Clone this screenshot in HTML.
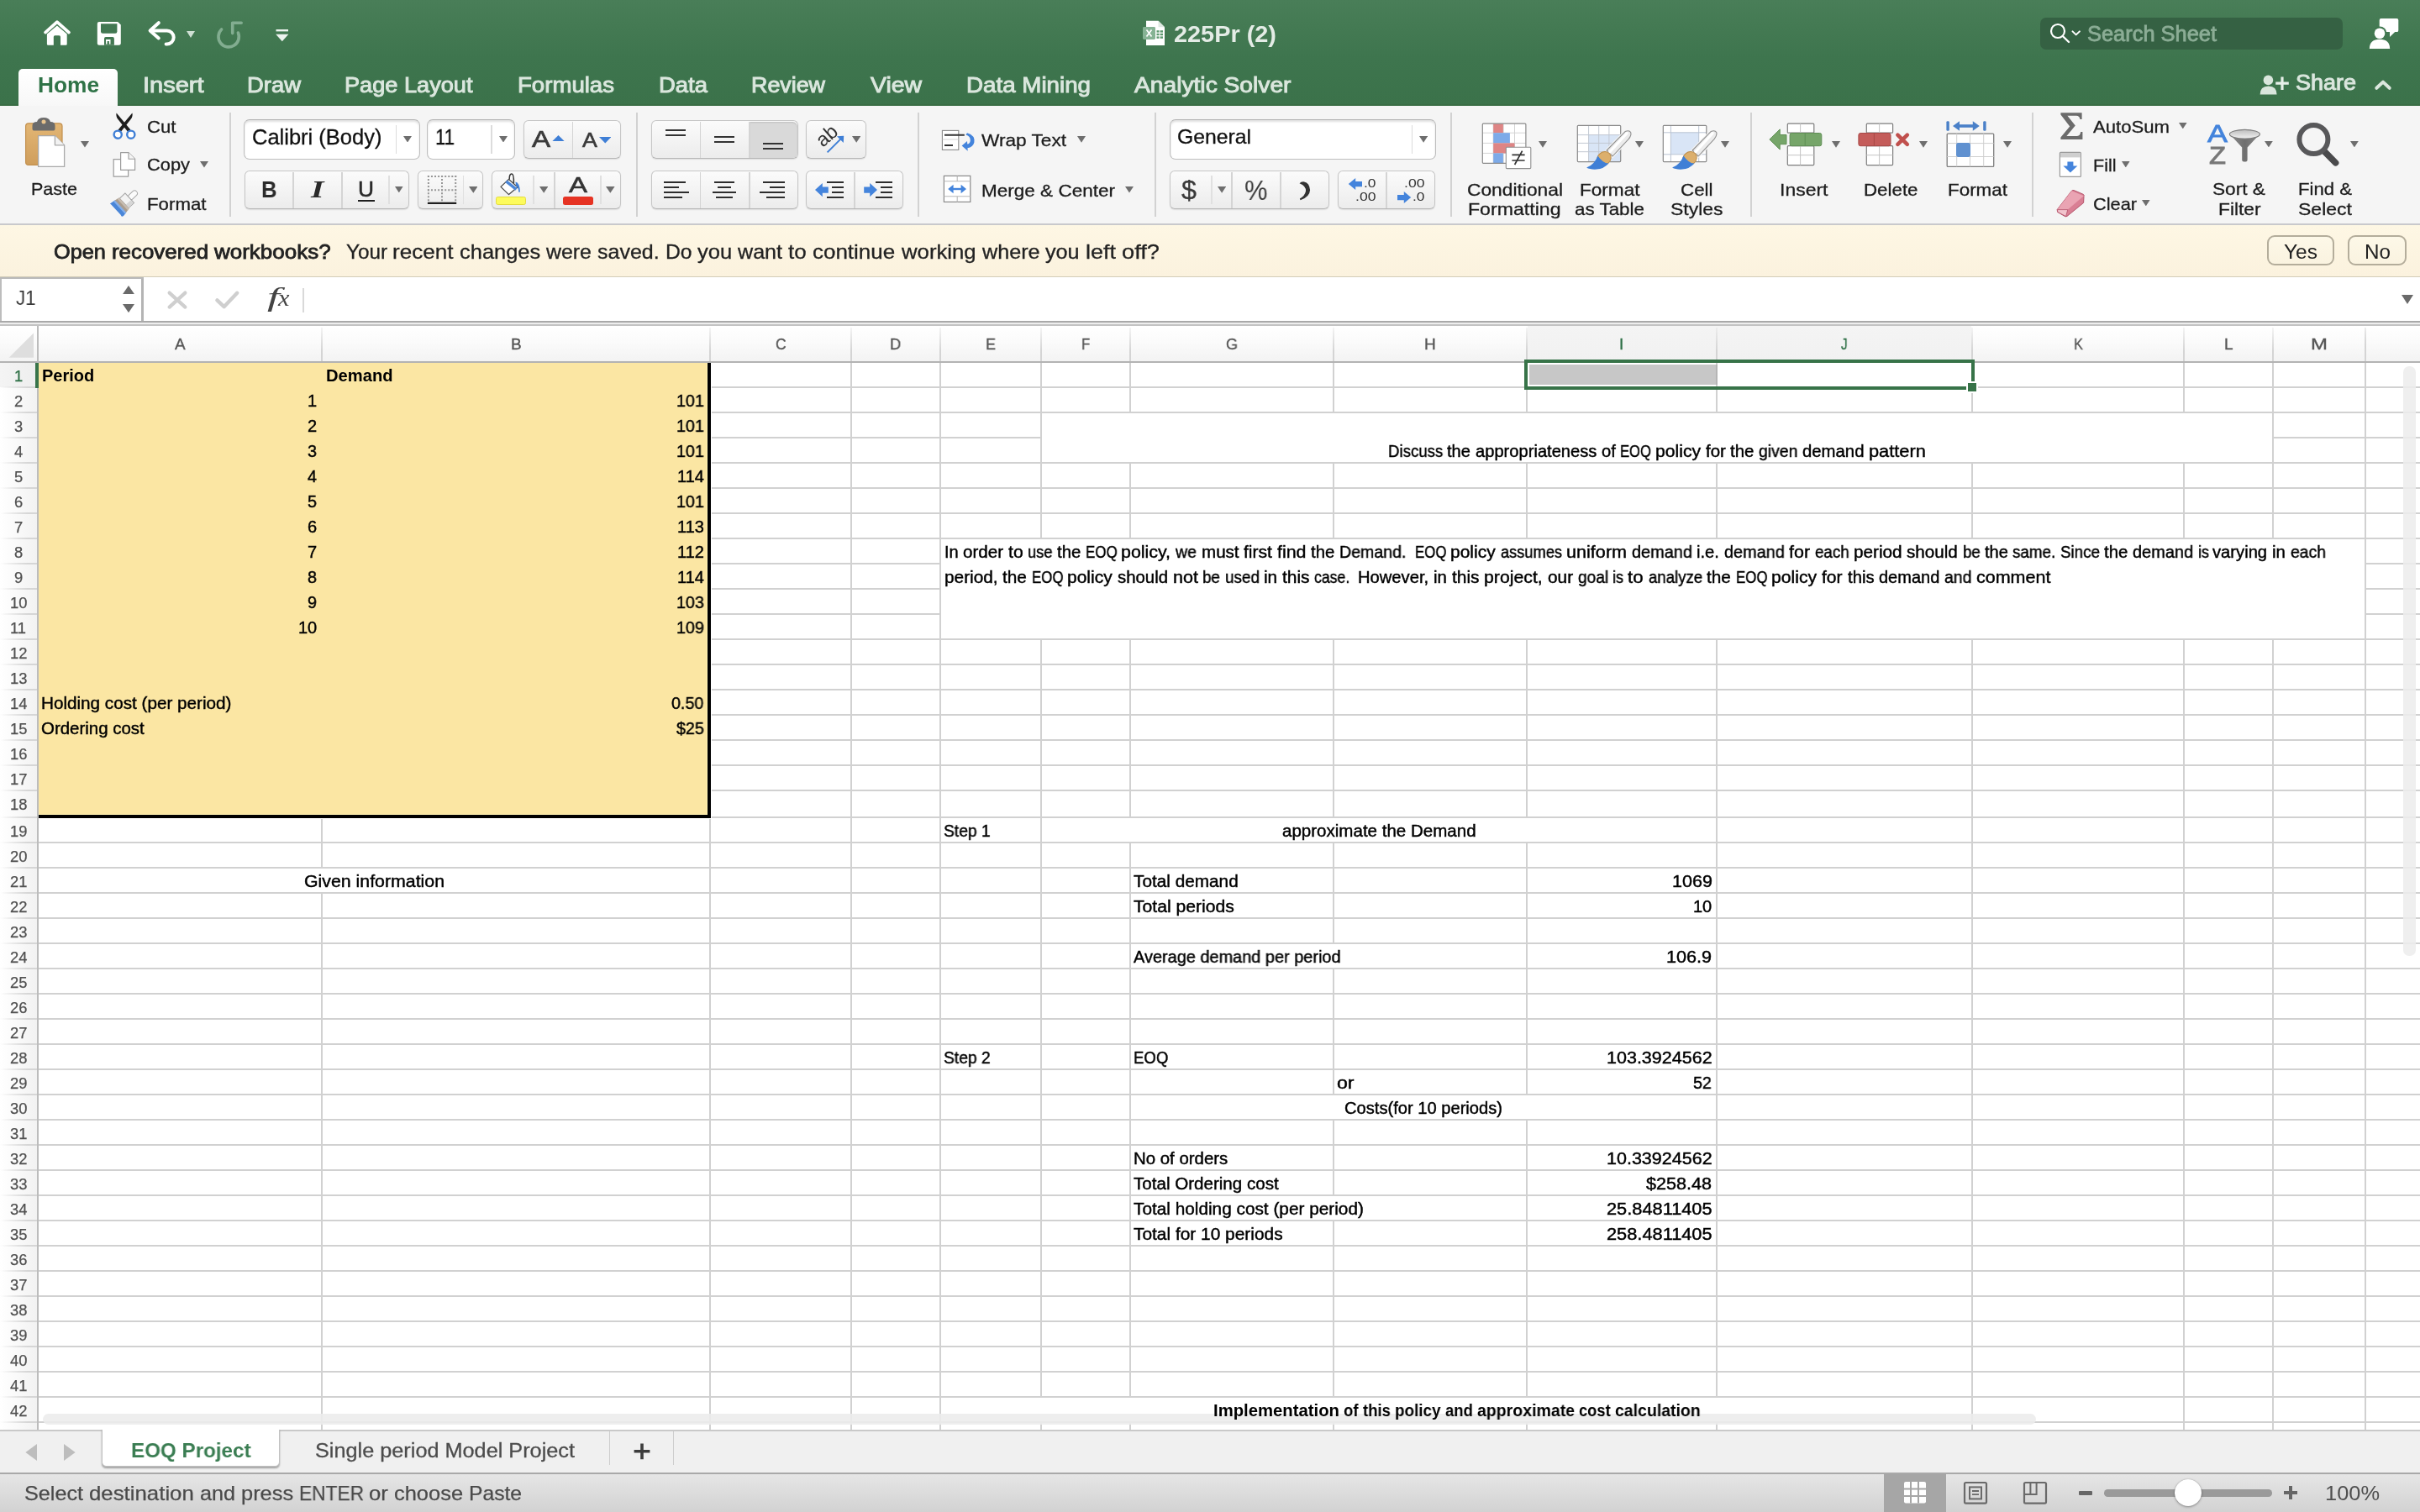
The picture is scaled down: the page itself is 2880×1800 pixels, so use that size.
<!DOCTYPE html>
<html><head><meta charset="utf-8"><title>225Pr (2)</title>
<style>
html,body{margin:0;padding:0;overflow:hidden;}
body{width:2880px;height:1800px;position:relative;overflow:hidden;background:#fff;font-family:"Liberation Sans",sans-serif;}
.b{position:absolute;display:block;}
.t{position:absolute;white-space:pre;transform-origin:0 0;display:block;will-change:transform;}
</style></head><body>
<div class="b" style="left:0px;top:0px;width:2880px;height:126px;background:linear-gradient(#497e58 0%,#447a53 25%,#3e754e 55%,#3b724a 100%);"></div>
<div class="b" style="left:0px;top:124px;width:2880px;height:2px;background:#38693f;opacity:.55"></div>
<svg class="b" style="left:48px;top:20px;" width="40" height="38" viewBox="0 0 40 38"><path d="M6 18.6 L19.9 6.2 L34 18.6" fill="none" stroke="#fff" stroke-width="3.7" stroke-linecap="round" stroke-linejoin="round"/>
<path d="M7.9 20.5 L19.9 10.4 L31.7 20.5 V32.4 Q31.7 33.7 30.4 33.7 H24 V24 Q24 22.2 22.4 22.2 H17.4 Q15.8 22.2 15.8 24 V33.7 H9.2 Q7.9 33.7 7.9 32.4 Z" fill="#fff"/></svg>
<svg class="b" style="left:114px;top:24px;" width="32" height="32" viewBox="0 0 32 32"><path d="M1.8 4.1 Q1.8 1.9 4 1.9 H26.2 L29.8 5.4 V27.5 Q29.8 29.7 27.6 29.7 H4 Q1.8 29.7 1.8 27.5 Z" fill="#fff"/>
<path d="M6 4.3 H25.4 V13.6 Q25.4 15.8 23.2 15.8 H8.2 Q6 15.8 6 13.6 Z" fill="#427852"/>
<path d="M10 22 Q10 20.1 11.9 20.1 H20 Q21.9 20.1 21.9 22 V29.7 H10 Z" fill="#427852"/>
<path d="M12 23 H17.5 V28.6 H15.9 V25 H13.6 V28.6 H12 Z" fill="#fff"/></svg>
<svg class="b" style="left:174px;top:22px;" width="40" height="36" viewBox="0 0 40 36"><path d="M14.8 5.2 L4.6 14.5 L14.8 23.5" fill="none" stroke="#fff" stroke-width="4" stroke-linecap="round" stroke-linejoin="round"/>
<path d="M5.6 14.5 H24.7 A8 8 0 0 1 24.7 30.5 H23.6" fill="none" stroke="#fff" stroke-width="4" stroke-linecap="round"/></svg>
<svg class="b" style="left:222px;top:37px;" width="10" height="8" viewBox="0 0 10 8"><path d="M0 0H10L5.0 8Z" fill="#cfe0d4"/></svg>
<svg class="b" style="left:254px;top:22px;" width="40" height="38" viewBox="0 0 40 38"><path d="M22.7 17.6 V5.2 H33.2" fill="none" stroke="#82ad90" stroke-width="3.6" stroke-linecap="round" stroke-linejoin="round"/>
<path d="M9.6 13 A12.2 12.2 0 1 0 29.4 17" fill="none" stroke="#82ad90" stroke-width="3.6" stroke-linecap="round"/></svg>
<svg class="b" style="left:327px;top:34px;" width="18" height="16" viewBox="0 0 18 16"><rect x="1.5" y="1" width="14.5" height="2.4" fill="#eef4f0"/><path d="M1.2 6.8 H16.4 L8.8 15.2 Z" fill="#eef4f0"/></svg>
<svg class="b" style="left:1358px;top:22px;" width="30" height="34" viewBox="0 0 30 34"><path d="M6 2.8 H20.5 L28 10.3 V32 H6 Z" fill="#fff"/><path d="M20.5 2.8 L28 10.3 H20.5 Z" fill="#dfe9e2"/>
<g fill="#5f9a70"><rect x="18.5" y="14.2" width="3" height="2.4"/><rect x="22.6" y="14.2" width="3.4" height="2.4"/><rect x="18.5" y="17.8" width="3" height="2.4"/><rect x="22.6" y="17.8" width="3.4" height="2.4"/><rect x="18.5" y="21.4" width="3" height="2.4"/><rect x="22.6" y="21.4" width="3.4" height="2.4"/></g>
<rect x="2" y="10" width="15" height="15" rx="1.4" fill="#86b394"/>
<path d="M6.5 13.6 L12.5 21.6 M12.5 13.6 L6.5 21.6" stroke="#fff" stroke-width="1.7"/></svg>
<div class="b" style="left:2428px;top:21px;width:360px;height:38px;background:#356143;border-radius:7px;"></div>
<svg class="b" style="left:2436px;top:24px;" width="48" height="32" viewBox="0 0 48 32"><circle cx="13" cy="13" r="8" fill="none" stroke="#fff" stroke-width="2.2"/><path d="M18.8 19 L26 26" stroke="#fff" stroke-width="2.4" stroke-linecap="round"/>
<path d="M30.5 13.4 L34.7 17.4 L38.9 13.4" fill="none" stroke="#fff" stroke-width="2" stroke-linecap="round" stroke-linejoin="round"/></svg>
<svg class="b" style="left:2816px;top:18px;" width="42" height="44" viewBox="0 0 42 44"><path d="M17.6 4 H36.4 Q38.3 4 38.3 5.9 V18.2 Q38.3 20.1 36.4 20.1 H34.2 L28 25.9 V20.1 H17.6 Q15.7 20.1 15.7 18.2 V5.9 Q15.7 4 17.6 4 Z" fill="#fff"/>
<circle cx="16" cy="21.8" r="8.4" fill="#417850"/><circle cx="16" cy="21.8" r="6.3" fill="#fff"/>
<path d="M3.8 39.9 Q4.2 28.8 16 28.8 Q27.8 28.8 28.2 39.9 Z" fill="#fff"/></svg>
<div class="b" style="left:22px;top:82px;width:118px;height:46px;background:linear-gradient(#ffffff,#f7f7f7);border-radius:5px 5px 0 0;"></div>
<svg class="b" style="left:2686px;top:86px;" width="42" height="30" viewBox="0 0 42 30"><circle cx="13.4" cy="9.4" r="5.8" fill="#d9e6dc"/><path d="M3.6 26.6 Q3.6 16.4 13.6 16.4 Q23.6 16.4 23.6 26.6 Z" fill="#d9e6dc"/>
<path d="M30 5.4 V21 M22.2 13.2 H37.8" stroke="#e6efe8" stroke-width="3.2"/></svg>
<svg class="b" style="left:2822px;top:92px;" width="28" height="18" viewBox="0 0 28 18"><path d="M6.3 12.8 L14 5.6 L21.7 12.8" fill="none" stroke="#dbe7de" stroke-width="4" stroke-linecap="round" stroke-linejoin="round"/></svg>
<div class="b" style="left:0px;top:126px;width:2880px;height:140px;background:#f5f5f5;"></div>
<div class="b" style="left:0px;top:266px;width:2880px;height:2px;background:#c9c9cc;"></div>
<div class="b" style="left:272.5px;top:134px;width:2px;height:124px;background:#d2d2d2;"></div>
<div class="b" style="left:756.5px;top:134px;width:2px;height:124px;background:#d2d2d2;"></div>
<div class="b" style="left:1092px;top:134px;width:2px;height:124px;background:#d2d2d2;"></div>
<div class="b" style="left:1374px;top:134px;width:2px;height:124px;background:#d2d2d2;"></div>
<div class="b" style="left:1726px;top:134px;width:2px;height:124px;background:#d2d2d2;"></div>
<div class="b" style="left:2082.5px;top:134px;width:2px;height:124px;background:#d2d2d2;"></div>
<div class="b" style="left:2418px;top:134px;width:2px;height:124px;background:#d2d2d2;"></div>
<svg class="b" style="left:26px;top:136px;" width="56" height="66" viewBox="0 0 56 66"><defs><linearGradient id="pg" x1="0" y1="0" x2="0" y2="1"><stop offset="0" stop-color="#e3b674"/><stop offset="1" stop-color="#cf9e5c"/></linearGradient></defs>
<rect x="4.6" y="10.8" width="43.4" height="49.6" rx="3.5" fill="url(#pg)" stroke="#c2904e" stroke-width="1.2"/>
<path d="M12.5 13.5 Q12.5 9.2 18 9 Q19.4 4 26 4 Q32.6 4 34 9 Q39.5 9.2 39.5 13.5 V17 Q39.5 19.6 37 19.6 H15 Q12.5 19.6 12.5 17 Z" fill="#6b6b6b"/>
<circle cx="26" cy="9" r="2.5" fill="#e8c48e"/>
<path d="M19.6 25.6 H39.4 L50.6 36.8 V62.4 H19.6 Z" fill="#fff" stroke="#a9a9a9" stroke-width="1.3"/>
<path d="M39.4 25.6 V36.8 H50.6" fill="#f2f2f2" stroke="#a9a9a9" stroke-width="1.3" stroke-linejoin="round"/></svg>
<svg class="b" style="left:96px;top:168px;" width="10" height="7.6" viewBox="0 0 10 7.6"><path d="M0 0H10L5.0 7.6Z" fill="#6e6e6e"/></svg>
<svg class="b" style="left:130px;top:130px;" width="36" height="40" viewBox="0 0 36 40"><path d="M8.6 4.4 Q7.6 8 10.4 12 L22.6 27.6 L25.4 24.6 Z" fill="#1e1e1e"/>
<path d="M27.4 4.4 Q28.4 8 25.6 12 L13.4 27.6 L10.6 24.6 Z" fill="#1e1e1e"/>
<circle cx="10.2" cy="30.2" r="4.6" fill="#fff" stroke="#3f7fd6" stroke-width="2.4"/><circle cx="25.8" cy="30.2" r="4.6" fill="#fff" stroke="#3f7fd6" stroke-width="2.4"/></svg>
<svg class="b" style="left:131px;top:178px;" width="34" height="36" viewBox="0 0 34 36"><path d="M4.2 11.6 H21.6 V32.2 H4.2 Z" fill="#fff" stroke="#9c9c9c" stroke-width="1.2"/>
<path d="M12.6 3.6 H22 L29.6 11.2 V24.4 H12.6 Z" fill="#fff" stroke="#9c9c9c" stroke-width="1.2" stroke-linejoin="round"/><path d="M22 3.6 V11.2 H29.6" fill="#f4f4f4" stroke="#9c9c9c" stroke-width="1.1" stroke-linejoin="round"/></svg>
<svg class="b" style="left:238px;top:192.4px;" width="10" height="7.6" viewBox="0 0 10 7.6"><path d="M0 0H10L5.0 7.6Z" fill="#6e6e6e"/></svg>
<svg class="b" style="left:126px;top:220px;" width="44" height="44" viewBox="0 0 44 44"><g transform="translate(13.6 29.4) rotate(-43)">
<rect x="19" y="-3.3" width="12.4" height="6.6" rx="3.3" fill="#fbfbfb" stroke="#a9a9a9" stroke-width="1"/>
<path d="M11 -7.8 H20 V7.8 H11 Z" fill="#f3f3f3" stroke="#a3a3a3" stroke-width="1"/><path d="M11.5 2.8 H19.5 V7.3 H11.5 Z" fill="#d6d6d6"/>
<path d="M5.2 -9.9 L11 -8.7 V8.7 L5.2 9.9 Z" fill="#a99c8e"/><path d="M8.4 -9.3 L11 -8.7 V8.7 L8.4 9.3 Z" fill="#c7bcb0"/>
<path d="M-1.4 -9.6 Q-2.4 -11 -0.8 -10.9 L5.2 -9.9 V9.9 L0.6 10.6 Q-2.8 10.4 -1.4 7.4 Z" fill="#4a86d8"/><path d="M3.2 -10.2 L5.2 -9.9 V9.9 L3.2 10.2 Z" fill="#86b0ea"/>
</g></svg>
<div class="b" style="left:290px;top:142px;width:210px;height:47.5px;background:#fff;border:1.5px solid #bebebe;border-top-color:#b2b2b2;border-radius:7px;box-sizing:border-box;box-shadow:inset 0 2px 2.5px rgba(0,0,0,.13);"></div>
<div class="b" style="left:470.5px;top:149px;width:1.5px;height:34px;background:#dcdcdc;"></div>
<svg class="b" style="left:480px;top:161.8px;" width="10" height="7.6" viewBox="0 0 10 7.6"><path d="M0 0H10L5.0 7.6Z" fill="#6e6e6e"/></svg>
<div class="b" style="left:508px;top:142px;width:105px;height:47.5px;background:#fff;border:1.5px solid #bebebe;border-top-color:#b2b2b2;border-radius:7px;box-sizing:border-box;box-shadow:inset 0 2px 2.5px rgba(0,0,0,.13);"></div>
<div class="b" style="left:584px;top:149px;width:1.5px;height:34px;background:#dcdcdc;"></div>
<svg class="b" style="left:593.5px;top:161.8px;" width="10" height="7.6" viewBox="0 0 10 7.6"><path d="M0 0H10L5.0 7.6Z" fill="#6e6e6e"/></svg>
<div class="b" style="left:623px;top:143px;width:116px;height:46px;background:linear-gradient(#fbfbfb,#ececec);border:1.5px solid #c6c6c6;border-bottom-color:#b7b7b7;border-radius:6px;box-sizing:border-box;box-shadow:0 1px 1.5px rgba(0,0,0,.10);"></div>
<div class="b" style="left:680.5px;top:144.5px;width:1.5px;height:43.5px;background:#d4d4d4;"></div>
<svg class="b" style="left:657px;top:161px;" width="15" height="7.4" viewBox="0 0 15 7.4"><path d="M0 7.4H15L7.5 0Z" fill="#3f7fd6"/></svg>
<svg class="b" style="left:712.5px;top:163.4px;" width="14.5" height="7.6" viewBox="0 0 14.5 7.6"><path d="M0 0H14.5L7.25 7.6Z" fill="#3f7fd6"/></svg>
<div class="b" style="left:291px;top:203px;width:196px;height:46px;background:linear-gradient(#fbfbfb,#ececec);border:1.5px solid #c6c6c6;border-bottom-color:#b7b7b7;border-radius:6px;box-sizing:border-box;box-shadow:0 1px 1.5px rgba(0,0,0,.10);"></div>
<div class="b" style="left:348.3px;top:204.5px;width:1.5px;height:43.5px;background:#d4d4d4;"></div>
<div class="b" style="left:406px;top:204.5px;width:1.5px;height:43.5px;background:#d4d4d4;"></div>
<div class="b" style="left:462.3px;top:209px;width:1.5px;height:34px;background:#e0e0e0;"></div>
<div class="b" style="left:426.2px;top:237.9px;width:20px;height:1.9px;background:#1f1f1f;"></div>
<svg class="b" style="left:470px;top:222px;" width="9.6" height="7.4" viewBox="0 0 9.6 7.4"><path d="M0 0H9.6L4.8 7.4Z" fill="#6e6e6e"/></svg>
<div class="b" style="left:497px;top:203px;width:78px;height:46px;background:linear-gradient(#fbfbfb,#ececec);border:1.5px solid #c6c6c6;border-bottom-color:#b7b7b7;border-radius:6px;box-sizing:border-box;box-shadow:0 1px 1.5px rgba(0,0,0,.10);"></div>
<svg class="b" style="left:506px;top:206px;" width="40" height="40" viewBox="0 0 40 40"><g stroke="#979797" stroke-width="2" stroke-dasharray="2 2.06" fill="none"><path d="M2.9 3.9 H37.2"/><path d="M2.9 20.3 H37.2"/><path d="M3.9 2.9 V33.4"/><path d="M20 2.9 V33.4"/><path d="M36.2 2.9 V33.4"/></g><path d="M2.9 35.9 H37.2" stroke="#1f1f1f" stroke-width="2.1"/></svg>
<div class="b" style="left:550.5px;top:209px;width:1.5px;height:34px;background:#e0e0e0;"></div>
<svg class="b" style="left:557.5px;top:222px;" width="10.6" height="7.8" viewBox="0 0 10.6 7.8"><path d="M0 0H10.6L5.3 7.8Z" fill="#6e6e6e"/></svg>
<div class="b" style="left:585px;top:203px;width:154px;height:46px;background:linear-gradient(#fbfbfb,#ececec);border:1.5px solid #c6c6c6;border-bottom-color:#b7b7b7;border-radius:6px;box-sizing:border-box;box-shadow:0 1px 1.5px rgba(0,0,0,.10);"></div>
<div class="b" style="left:590px;top:234.2px;width:36px;height:9.5px;background:#fdfb5c;border:1px solid #e4dc40;box-sizing:border-box;border-radius:2.5px;"></div>
<svg class="b" style="left:592px;top:204px;" width="32" height="32" viewBox="0 0 32 32"><path d="M4 18.4 L13.5 9.4 L24 18.8 L13.5 27.6 Z" fill="#fff" stroke="#4a4a4a" stroke-width="1.3" stroke-linejoin="round"/>
<path d="M10.4 11.9 L22.4 21.3" stroke="#4a86d8" stroke-width="3.4"/>
<path d="M21.4 12.4 Q26.6 13.2 26.9 24.6 Q26 25.2 25.2 24.4 Q25.2 19 22.2 17.4 Z" fill="#3f7fd6"/>
<path d="M14.2 9 Q14.2 2.8 17 3 Q19.6 3.2 19.4 13.4" fill="none" stroke="#333" stroke-width="1.5" stroke-linecap="round"/></svg>
<div class="b" style="left:634.3px;top:209px;width:1.5px;height:34px;background:#e0e0e0;"></div>
<svg class="b" style="left:642px;top:222px;" width="10.4" height="7.8" viewBox="0 0 10.4 7.8"><path d="M0 0H10.4L5.2 7.8Z" fill="#6e6e6e"/></svg>
<div class="b" style="left:659px;top:204.5px;width:1.5px;height:43.5px;background:#d4d4d4;"></div>
<div class="b" style="left:670px;top:234.2px;width:36px;height:9.5px;background:#e63323;border-radius:2.5px;"></div>
<div class="b" style="left:714px;top:209px;width:1.5px;height:34px;background:#e0e0e0;"></div>
<svg class="b" style="left:721.2px;top:222px;" width="10.6" height="7.8" viewBox="0 0 10.6 7.8"><path d="M0 0H10.6L5.3 7.8Z" fill="#6e6e6e"/></svg>
<div class="b" style="left:775px;top:143px;width:174.5px;height:46px;background:linear-gradient(#fbfbfb,#ececec);border:1.5px solid #c6c6c6;border-bottom-color:#b7b7b7;border-radius:6px;box-sizing:border-box;box-shadow:0 1px 1.5px rgba(0,0,0,.10);"></div>
<div class="b" style="left:892px;top:144.5px;width:56.5px;height:43.5px;background:#d9d9d9;border-radius:0 6px 6px 0;box-shadow:inset 0 1px 2px rgba(0,0,0,.12);"></div>
<div class="b" style="left:832.5px;top:144.5px;width:1.5px;height:43.5px;background:#d4d4d4;"></div>
<div class="b" style="left:891px;top:144.5px;width:1.5px;height:43.5px;background:#d4d4d4;"></div>
<div class="b" style="left:792px;top:154px;width:23.8px;height:2px;background:#333;"></div>
<div class="b" style="left:792px;top:160px;width:23.8px;height:2px;background:#333;"></div>
<div class="b" style="left:850.2px;top:162px;width:23.8px;height:2px;background:#333;"></div>
<div class="b" style="left:850.2px;top:168px;width:23.8px;height:2px;background:#333;"></div>
<div class="b" style="left:908.2px;top:170.2px;width:23.8px;height:2px;background:#333;"></div>
<div class="b" style="left:908.2px;top:176.2px;width:23.8px;height:2px;background:#333;"></div>
<div class="b" style="left:959px;top:143px;width:72px;height:46px;background:linear-gradient(#fbfbfb,#ececec);border:1.5px solid #c6c6c6;border-bottom-color:#b7b7b7;border-radius:6px;box-sizing:border-box;box-shadow:0 1px 1.5px rgba(0,0,0,.10);"></div>
<svg class="b" style="left:964px;top:146px;will-change:transform;" width="48" height="42" viewBox="0 0 48 42"><text x="0" y="0" font-family="Liberation Sans" font-size="23.5" fill="#333" transform="translate(15.2 30) rotate(-41)">ab</text>
<path d="M20.6 35.4 L38.6 17.4" stroke="#3f7fd6" stroke-width="2"/><path d="M32 16.2 L40.2 15.8 L39.8 24 Z" fill="#3f7fd6"/></svg>
<svg class="b" style="left:1014px;top:162.2px;" width="10.4" height="7.8" viewBox="0 0 10.4 7.8"><path d="M0 0H10.4L5.2 7.8Z" fill="#6e6e6e"/></svg>
<div class="b" style="left:775px;top:203px;width:174.5px;height:46px;background:linear-gradient(#fbfbfb,#ececec);border:1.5px solid #c6c6c6;border-bottom-color:#b7b7b7;border-radius:6px;box-sizing:border-box;box-shadow:0 1px 1.5px rgba(0,0,0,.10);"></div>
<div class="b" style="left:832.5px;top:204.5px;width:1.5px;height:43.5px;background:#d4d4d4;"></div>
<div class="b" style="left:891px;top:204.5px;width:1.5px;height:43.5px;background:#d4d4d4;"></div>
<div class="b" style="left:790px;top:216px;width:26px;height:2px;background:#2e2e2e;"></div>
<div class="b" style="left:790px;top:222px;width:18px;height:2px;background:#2e2e2e;"></div>
<div class="b" style="left:790px;top:228.2px;width:30px;height:2px;background:#2e2e2e;"></div>
<div class="b" style="left:790px;top:234.2px;width:22px;height:2px;background:#2e2e2e;"></div>
<div class="b" style="left:850px;top:216px;width:24px;height:2px;background:#2e2e2e;"></div>
<div class="b" style="left:854px;top:222px;width:16px;height:2px;background:#2e2e2e;"></div>
<div class="b" style="left:848px;top:228.2px;width:28px;height:2px;background:#2e2e2e;"></div>
<div class="b" style="left:852px;top:234.2px;width:20px;height:2px;background:#2e2e2e;"></div>
<div class="b" style="left:908px;top:216px;width:26px;height:2px;background:#2e2e2e;"></div>
<div class="b" style="left:916px;top:222px;width:18px;height:2px;background:#2e2e2e;"></div>
<div class="b" style="left:904px;top:228.2px;width:30px;height:2px;background:#2e2e2e;"></div>
<div class="b" style="left:912px;top:234.2px;width:22px;height:2px;background:#2e2e2e;"></div>
<div class="b" style="left:959px;top:203px;width:116px;height:46px;background:linear-gradient(#fbfbfb,#ececec);border:1.5px solid #c6c6c6;border-bottom-color:#b7b7b7;border-radius:6px;box-sizing:border-box;box-shadow:0 1px 1.5px rgba(0,0,0,.10);"></div>
<div class="b" style="left:1016.2px;top:204.5px;width:1.5px;height:43.5px;background:#d4d4d4;"></div>
<div class="b" style="left:984.2px;top:216px;width:19.799999999999955px;height:2px;background:#2e2e2e;"></div>
<div class="b" style="left:990.2px;top:222px;width:13.799999999999955px;height:2px;background:#2e2e2e;"></div>
<div class="b" style="left:990.2px;top:228.2px;width:13.799999999999955px;height:2px;background:#2e2e2e;"></div>
<div class="b" style="left:984.2px;top:234.2px;width:19.799999999999955px;height:2px;background:#2e2e2e;"></div>
<div class="b" style="left:1042px;top:216px;width:20px;height:2px;background:#2e2e2e;"></div>
<div class="b" style="left:1048px;top:222px;width:14px;height:2px;background:#2e2e2e;"></div>
<div class="b" style="left:1048px;top:228.2px;width:14px;height:2px;background:#2e2e2e;"></div>
<div class="b" style="left:1042px;top:234.2px;width:20px;height:2px;background:#2e2e2e;"></div>
<svg class="b" style="left:968px;top:216px;" width="20" height="20" viewBox="0 0 20 20"><path d="M2 10.1 L10.8 2 V6.6 H17.8 V13.8 H10.8 V18.2 Z" fill="#4484dc"/></svg>
<svg class="b" style="left:1026px;top:216px;" width="20" height="20" viewBox="0 0 20 20"><path d="M18 10.1 L9.2 2 V6.6 H2.2 V13.8 H9.2 V18.2 Z" fill="#4484dc"/></svg>
<svg class="b" style="left:1118px;top:152px;" width="46" height="32" viewBox="0 0 46 32"><rect x="3.4" y="3.4" width="19.4" height="23" fill="#fff" stroke="#8a8a8a" stroke-width="1.1"/>
<path d="M3.6 14 H22.6" stroke="#d4d4d4" stroke-width="1"/>
<path d="M6 8.7 H29.8 M6 21 H16" stroke="#333" stroke-width="2"/>
<path d="M33 6.2 Q42.8 9 41.4 17.6 Q40 23.4 33.4 24.2 L33.8 27.8 L26.6 21.6 L33 16 L33.2 19.6 Q36.4 19 36.8 15.2 Q37 10.4 31.4 8.6 Z" fill="#4484dc"/></svg>
<svg class="b" style="left:1282px;top:162px;" width="10" height="7.8" viewBox="0 0 10 7.8"><path d="M0 0H10L5.0 7.8Z" fill="#6e6e6e"/></svg>
<svg class="b" style="left:1120px;top:206px;" width="38" height="38" viewBox="0 0 38 38"><rect x="3.4" y="3.4" width="31.4" height="31" fill="#fff" stroke="#8a8a8a" stroke-width="1.2"/>
<path d="M3.4 9.8 H34.8 M3.4 27.8 H34.8 M19.2 3.4 V9.8 M19.2 27.8 V34.4" stroke="#b9b9b9" stroke-width="1.1"/>
<path d="M12 19 H27" stroke="#4484dc" stroke-width="2.4"/><path d="M8.2 19 L14.6 13.8 V24.2 Z M30 19 L23.6 13.8 V24.2 Z" fill="#4484dc"/></svg>
<svg class="b" style="left:1339.3px;top:222px;" width="10" height="7.6" viewBox="0 0 10 7.6"><path d="M0 0H10L5.0 7.6Z" fill="#6e6e6e"/></svg>
<div class="b" style="left:1391.5px;top:142px;width:317.5px;height:47.5px;background:#fff;border:1.5px solid #bebebe;border-top-color:#b2b2b2;border-radius:7px;box-sizing:border-box;box-shadow:inset 0 2px 2.5px rgba(0,0,0,.13);"></div>
<div class="b" style="left:1679.5px;top:149px;width:1.5px;height:34px;background:#dcdcdc;"></div>
<svg class="b" style="left:1688.8px;top:161.8px;" width="10.2" height="7.8" viewBox="0 0 10.2 7.8"><path d="M0 0H10.2L5.1 7.8Z" fill="#6e6e6e"/></svg>
<div class="b" style="left:1392.4px;top:203px;width:189.6px;height:46px;background:linear-gradient(#fbfbfb,#ececec);border:1.5px solid #c6c6c6;border-bottom-color:#b7b7b7;border-radius:6px;box-sizing:border-box;box-shadow:0 1px 1.5px rgba(0,0,0,.10);"></div>
<div class="b" style="left:1465px;top:204.5px;width:1.5px;height:43.5px;background:#d4d4d4;"></div>
<div class="b" style="left:1523.4px;top:204.5px;width:1.5px;height:43.5px;background:#d4d4d4;"></div>
<div class="b" style="left:1441.2px;top:209px;width:1.5px;height:34px;background:#e0e0e0;"></div>
<svg class="b" style="left:1448.8px;top:222px;" width="10.2" height="7.8" viewBox="0 0 10.2 7.8"><path d="M0 0H10.2L5.1 7.8Z" fill="#6e6e6e"/></svg>
<svg class="b" style="left:1542px;top:212px;" width="22" height="30" viewBox="0 0 22 30"><path d="M4.5 6.2 Q6.4 4 10.1 4.4 Q16.4 5.6 17.1 14.2 Q16.6 22.6 5.6 26.2 L4.8 24.4 Q11 21 12 15.4 Q12.6 9.6 4.5 6.2 Z" fill="#333"/></svg>
<div class="b" style="left:1592px;top:203px;width:116px;height:46px;background:linear-gradient(#fbfbfb,#ececec);border:1.5px solid #c6c6c6;border-bottom-color:#b7b7b7;border-radius:6px;box-sizing:border-box;box-shadow:0 1px 1.5px rgba(0,0,0,.10);"></div>
<div class="b" style="left:1649px;top:204.5px;width:1.5px;height:43.5px;background:#d4d4d4;"></div>
<svg class="b" style="left:1603px;top:210px;" width="20" height="18" viewBox="0 0 20 18"><path d="M1.8 9 L10.2 2 V6 H18 V12.2 H10.2 V16 Z" fill="#4484dc"/></svg>
<svg class="b" style="left:1661px;top:226px;" width="20" height="18" viewBox="0 0 20 18"><path d="M18.2 9 L9.8 2 V6 H2 V12.2 H9.8 V16 Z" fill="#4484dc"/></svg>
<svg class="b" style="left:1760px;top:144px;" width="66" height="60" viewBox="0 0 66 60"><rect x="4.3" y="3.2" width="51.6" height="47.1" fill="#fff"/>
<path d="M17.2 3.2 V50.3 M29.2 3.2 V50.3 M42.5 3.2 V50.3 M4.3 14.2 H55.9 M4.3 26.4 H55.9 M4.3 38.4 H55.9" stroke="#d4d4d4" stroke-width="1" fill="none"/>
<rect x="17.2" y="3.2" width="11.7" height="11" fill="#de8585"/><rect x="17.2" y="14.2" width="19.7" height="12.2" fill="#7daae8"/>
<rect x="17.2" y="26.4" width="25.3" height="12" fill="#de8585"/><rect x="17.2" y="38.4" width="11.7" height="11.9" fill="#7daae8"/>
<rect x="4.3" y="3.2" width="51.6" height="47.1" fill="none" stroke="#8a8a8a" stroke-width="1.2" rx="1"/>
<rect x="32.3" y="31.3" width="29.5" height="25.3" fill="#fff" stroke="#8f8f8f" stroke-width="1.1" rx="1"/>
<path d="M39.4 40.4 H54.6 M39.4 47 H54.6 M51.6 35.6 L42.6 52" stroke="#333" stroke-width="1.7"/></svg>
<svg class="b" style="left:1831px;top:168px;" width="10" height="7.8" viewBox="0 0 10 7.8"><path d="M0 0H10L5.0 7.8Z" fill="#6e6e6e"/></svg>
<svg class="b" style="left:1874px;top:144px;" width="72" height="60" viewBox="0 0 72 60"><rect x="3.3" y="5.3" width="51.4" height="43.3" fill="#fff"/>
<rect x="16.6" y="16.6" width="38.1" height="32" fill="#d9e5f6"/>
<path d="M16.6 5.3 V48.6 M28.7 5.3 V48.6 M40.9 5.3 V48.6 M3.3 16.6 H54.7 M3.3 26.4 H54.7 M3.3 36.7 H54.7" stroke="#c2c8d2" stroke-width="1" fill="none"/>
<rect x="3.3" y="5.3" width="51.4" height="43.3" fill="none" stroke="#8a8a8a" stroke-width="1.2" rx="1"/><g transform="translate(-1.5 4)">
<path d="M61.6 8.6 Q66.4 6.4 68.2 9.6 Q69.4 13 65.6 17.6 L46.6 38 L39.6 31 Z" fill="none" stroke="#f5f5f5" stroke-width="3.4" stroke-linejoin="round"/>
<path d="M61.6 8.6 Q66.4 6.4 68.2 9.6 Q69.4 13 65.6 17.6 L46.6 38 L39.6 31 Z" fill="#ececec" stroke="#8f8f8f" stroke-width="1.1" stroke-linejoin="round"/>
<path d="M63.6 10.6 L43.2 33" stroke="#ffffff" stroke-width="3.2" stroke-linecap="round"/>
<ellipse cx="36.4" cy="40.6" rx="9.4" ry="8" transform="rotate(-40 36.4 40.6)" fill="#f5f5f5"/>
<ellipse cx="36.4" cy="40.6" rx="8.8" ry="7.6" transform="rotate(-40 36.4 40.6)" fill="#dcaf6c" stroke="#b98a49" stroke-width="1"/>
<path d="M29 37.4 Q35.6 46.8 42 46.4 Q36 53 27.6 53.6 Q19.6 54 15.6 51.6 Q25 48 29 37.4 Z" fill="#3f7fd6"/>
</g></svg>
<svg class="b" style="left:1945.8px;top:168px;" width="10" height="7.8" viewBox="0 0 10 7.8"><path d="M0 0H10L5.0 7.8Z" fill="#6e6e6e"/></svg>
<svg class="b" style="left:1976px;top:144px;" width="72" height="60" viewBox="0 0 72 60"><rect x="3.3" y="5.3" width="51.5" height="43.3" fill="#fff"/>
<rect x="12.4" y="13.8" width="33.3" height="26" fill="#d9e5f6"/>
<path d="M12.4 5.3 V48.6 M45.7 5.3 V48.6 M3.3 13.8 H54.8 M3.3 39.8 H54.8" stroke="#b9c3d2" stroke-width="1" fill="none"/>
<rect x="3.3" y="5.3" width="51.5" height="43.3" fill="none" stroke="#8a8a8a" stroke-width="1.2" rx="1"/><g transform="translate(-1.5 4)">
<path d="M61.6 8.6 Q66.4 6.4 68.2 9.6 Q69.4 13 65.6 17.6 L46.6 38 L39.6 31 Z" fill="none" stroke="#f5f5f5" stroke-width="3.4" stroke-linejoin="round"/>
<path d="M61.6 8.6 Q66.4 6.4 68.2 9.6 Q69.4 13 65.6 17.6 L46.6 38 L39.6 31 Z" fill="#ececec" stroke="#8f8f8f" stroke-width="1.1" stroke-linejoin="round"/>
<path d="M63.6 10.6 L43.2 33" stroke="#ffffff" stroke-width="3.2" stroke-linecap="round"/>
<ellipse cx="36.4" cy="40.6" rx="9.4" ry="8" transform="rotate(-40 36.4 40.6)" fill="#f5f5f5"/>
<ellipse cx="36.4" cy="40.6" rx="8.8" ry="7.6" transform="rotate(-40 36.4 40.6)" fill="#dcaf6c" stroke="#b98a49" stroke-width="1"/>
<path d="M29 37.4 Q35.6 46.8 42 46.4 Q36 53 27.6 53.6 Q19.6 54 15.6 51.6 Q25 48 29 37.4 Z" fill="#3f7fd6"/>
</g></svg>
<svg class="b" style="left:2048px;top:168px;" width="10" height="7.8" viewBox="0 0 10 7.8"><path d="M0 0H10L5.0 7.8Z" fill="#6e6e6e"/></svg>
<svg class="b" style="left:2102px;top:142px;" width="70" height="58" viewBox="0 0 70 58"><rect x="25.3" y="5.2" width="31.5" height="11" fill="#fff" stroke="#7d7d7d" stroke-width="1.2" rx="1"/><path d="M40.6 5.2 V16.2" stroke="#c4c4c4"/>
<rect x="25.3" y="31.7" width="31.5" height="22.9" fill="#fff" stroke="#7d7d7d" stroke-width="1.2" rx="1"/><path d="M40.6 31.7 V54.6 M25.3 42.7 H56.8" stroke="#c4c4c4"/>
<rect x="28.1" y="16.5" width="37.7" height="15.2" rx="2.2" fill="#76a569" stroke="#5f8e54" stroke-width="1"/><path d="M46.2 16.5 V31.7" stroke="#5f8e54" stroke-width="1"/>
<path d="M3.9 24 L16.2 11.9 V18.5 H24 V29.7 H16.2 V36 Z" fill="#76a569" stroke="#5f8e54" stroke-width="1" stroke-linejoin="round"/></svg>
<svg class="b" style="left:2180.2px;top:167.8px;" width="10" height="7.8" viewBox="0 0 10 7.8"><path d="M0 0H10L5.0 7.8Z" fill="#6e6e6e"/></svg>
<svg class="b" style="left:2208px;top:142px;" width="70" height="58" viewBox="0 0 70 58"><rect x="13.3" y="5.2" width="31.3" height="11" fill="#fff" stroke="#7d7d7d" stroke-width="1.2" rx="1"/><path d="M28.6 5.2 V16.2" stroke="#c4c4c4"/>
<rect x="13.3" y="31.7" width="31.3" height="22.9" fill="#fff" stroke="#7d7d7d" stroke-width="1.2" rx="1"/><path d="M28.6 31.7 V54.6 M13.3 42.7 H44.6" stroke="#c4c4c4"/>
<rect x="3.9" y="16.5" width="38.1" height="15.2" rx="2.2" fill="#c45c5a" stroke="#a84846" stroke-width="1"/><path d="M22.4 16.5 V31.7" stroke="#a84846" stroke-width="1"/>
<path d="M50.4 18.6 L61.8 29.8 M61.8 18.6 L50.4 29.8" stroke="#c0504d" stroke-width="4.6" stroke-linecap="round"/></svg>
<svg class="b" style="left:2284.1px;top:167.8px;" width="10" height="7.8" viewBox="0 0 10 7.8"><path d="M0 0H10L5.0 7.8Z" fill="#6e6e6e"/></svg>
<svg class="b" style="left:2312px;top:140px;" width="66" height="62" viewBox="0 0 66 62"><rect x="5.2" y="19.1" width="55.5" height="39.3" fill="#fff" stroke="#7d7d7d" stroke-width="1.3" rx="1"/>
<path d="M16.7 19.1 V58.4 M32.5 19.1 V58.4 M48.7 19.1 V58.4 M5.2 30.6 H60.7 M5.2 46.5 H60.7" stroke="#cfcfcf" stroke-width="1"/>
<rect x="16" y="30.1" width="17" height="16.8" rx="2.4" fill="#6091d0"/>
<rect x="4.4" y="4.2" width="3.4" height="11.6" rx="1.4" fill="#4a80c8"/><rect x="48.2" y="4.2" width="3.4" height="11.6" rx="1.4" fill="#4a80c8"/>
<path d="M17 10 H39" stroke="#4a80c8" stroke-width="3.6"/><path d="M12 10 L20 4.2 V15.8 Z M43.8 10 L35.8 4.2 V15.8 Z" fill="#4a80c8"/></svg>
<svg class="b" style="left:2384.2px;top:167.8px;" width="10" height="7.8" viewBox="0 0 10 7.8"><path d="M0 0H10L5.0 7.8Z" fill="#6e6e6e"/></svg>
<svg class="b" style="left:2448px;top:130px;" width="34" height="40" viewBox="0 0 34 40"><path d="M4.4 4.2 H29.6 V12 H27.4 Q27 8 23 7.8 H12.4 L21.8 19.6 L11.4 32 H24 Q27.6 31.8 28.2 27 H30.4 V36 H4.4 V33.4 L15.2 20.4 L4.4 6.6 Z" fill="#6b6b6b"/></svg>
<svg class="b" style="left:2593.4px;top:145.8px;" width="9.6" height="7.4" viewBox="0 0 9.6 7.4"><path d="M0 0H9.6L4.8 7.4Z" fill="#6e6e6e"/></svg>
<svg class="b" style="left:2448px;top:178px;" width="32" height="36" viewBox="0 0 32 36"><rect x="3.4" y="3.4" width="25" height="29" fill="#fff" stroke="#9a9a9a" stroke-width="1.2" rx="1"/><rect x="4" y="4" width="23.8" height="5.4" fill="#cfcfcf"/>
<path d="M12.4 14.4 H19.4 V19.6 H24.4 L15.9 27.6 L7.4 19.6 H12.4 Z" fill="#4484dc"/></svg>
<svg class="b" style="left:2525px;top:192px;" width="9.6" height="7.4" viewBox="0 0 9.6 7.4"><path d="M0 0H9.6L4.8 7.4Z" fill="#6e6e6e"/></svg>
<svg class="b" style="left:2444px;top:222px;" width="40" height="40" viewBox="0 0 40 40"><path d="M4.2 27.6 L21.4 5.2 Q22.6 4 24.2 4.6 L35.4 9.4 Q36.6 10.2 36 11.6 L35.6 19.4 L16 35.4 Q14.6 36.2 13.2 35.4 L4.6 30.4 Z" fill="#d97f94" stroke="#b5546b" stroke-width="1"/>
<path d="M21.4 5.2 L35.8 11.2 L16.8 27.4 L4.4 27.4 Z" fill="#eaa4b3"/>
<path d="M4.4 27.6 L16.8 27.6 L14.6 35.6 L4.8 30.4 Z" fill="#f1c4cd" stroke="#b5546b" stroke-width=".8"/></svg>
<svg class="b" style="left:2549.4px;top:237.8px;" width="9.6" height="7.4" viewBox="0 0 9.6 7.4"><path d="M0 0H9.6L4.8 7.4Z" fill="#6e6e6e"/></svg>
<svg class="b" style="left:2650px;top:150px;" width="44" height="46" viewBox="0 0 44 46"><defs><linearGradient id="fg" x1="0" y1="0" x2="1" y2="0"><stop offset="0" stop-color="#8d8d8d"/><stop offset=".5" stop-color="#6f6f6f"/><stop offset="1" stop-color="#8a8a8a"/></linearGradient>
<linearGradient id="fe" x1="0" y1="0" x2="0" y2="1"><stop offset="0" stop-color="#bdbdbd"/><stop offset="1" stop-color="#f2f2f2"/></linearGradient></defs>
<path d="M3.4 9.6 L18.2 25.6 V40.4 Q18.2 42.4 20.4 42.4 H22.6 Q24.6 42.4 24.6 40.4 V25.6 L39.4 9.6 Z" fill="url(#fg)"/>
<ellipse cx="21.4" cy="9.8" rx="18" ry="5.4" fill="url(#fe)" stroke="#7d7d7d" stroke-width="1.2"/></svg>
<svg class="b" style="left:2695px;top:168px;" width="9.8" height="7.4" viewBox="0 0 9.8 7.4"><path d="M0 0H9.8L4.9 7.4Z" fill="#6e6e6e"/></svg>
<svg class="b" style="left:2728px;top:140px;" width="62" height="62" viewBox="0 0 62 62"><path d="M37 39 L51.6 53.8" stroke="#4a4a4c" stroke-width="7.6" stroke-linecap="round"/>
<circle cx="25.4" cy="26" r="17" fill="#f5f5f5" stroke="#58585a" stroke-width="6"/></svg>
<svg class="b" style="left:2797px;top:168px;" width="9.8" height="7.4" viewBox="0 0 9.8 7.4"><path d="M0 0H9.8L4.9 7.4Z" fill="#6e6e6e"/></svg>
<div class="b" style="left:0px;top:268px;width:2880px;height:61px;background:linear-gradient(#fef7e4,#fbf2de);"></div>
<div class="b" style="left:0px;top:328.5px;width:2880px;height:1.8px;background:#d3ccb8;"></div>
<div class="b" style="left:2698px;top:280px;width:80px;height:36px;background:linear-gradient(#fdf8e8,#faf3e0);border:2px solid #b4ad9b;border-radius:9px;box-sizing:border-box;"></div>
<div class="b" style="left:2794px;top:280px;width:70px;height:36px;background:linear-gradient(#fdf8e8,#faf3e0);border:2px solid #b4ad9b;border-radius:9px;box-sizing:border-box;"></div>
<div class="b" style="left:0px;top:330px;width:2880px;height:52px;background:#fff;"></div>
<div class="b" style="left:0px;top:330px;width:171px;height:2px;background:#b9b9b9;"></div>
<div class="b" style="left:0px;top:332px;width:1.6px;height:50px;background:#bdbdbd;"></div>
<div class="b" style="left:168.2px;top:332px;width:2.6px;height:52px;background:#b4b4b4;"></div>
<div class="b" style="left:0px;top:382px;width:2880px;height:2px;background:#a9a9a9;"></div>
<div class="b" style="left:0px;top:384px;width:2880px;height:2px;background:#ededed;"></div>
<div class="b" style="left:0px;top:386px;width:2880px;height:2px;background:#c3c3c3;"></div>
<svg class="b" style="left:146px;top:339.8px;" width="14" height="10.2" viewBox="0 0 14 10.2"><path d="M0 10.2H14L7.0 0Z" fill="#6a6a6a"/></svg>
<svg class="b" style="left:146px;top:362px;" width="14" height="10.2" viewBox="0 0 14 10.2"><path d="M0 0H14L7.0 10.2Z" fill="#6a6a6a"/></svg>
<svg class="b" style="left:198px;top:344px;" width="28" height="26" viewBox="0 0 28 26"><path d="M3.6 4.6 L22.4 21.6 M22.4 4.6 L3.6 21.6" stroke="#cfcfcf" stroke-width="4.2" stroke-linecap="round"/></svg>
<svg class="b" style="left:254px;top:344px;" width="34" height="26" viewBox="0 0 34 26"><path d="M4.4 13.4 L12.6 21.2 L28.2 4.8" fill="none" stroke="#cfcfcf" stroke-width="4.4" stroke-linecap="round" stroke-linejoin="round"/></svg>
<div class="b" style="left:360.3px;top:342.6px;width:1.6px;height:29px;background:#d9d9d9;"></div>
<svg class="b" style="left:2858px;top:351px;" width="14" height="11" viewBox="0 0 14 11"><path d="M0 0H14L7.0 11Z" fill="#6a6a6a"/></svg>
<div class="b" style="left:0px;top:388px;width:2880px;height:1314px;background:#fff;"></div>
<div class="b" style="left:0px;top:388px;width:2880px;height:42px;background:linear-gradient(#ffffff,#fbfbfb 45%,#f3f3f3);"></div>
<div class="b" style="left:1818px;top:388px;width:528px;height:42px;background:linear-gradient(#f4f4f4,#f1f1f1);"></div>
<div class="b" style="left:0px;top:430px;width:2880px;height:2px;background:#b3b3b3;"></div>
<svg class="b" style="left:8px;top:394px;" width="36" height="34" viewBox="0 0 36 34"><path d="M2.6 31.8 H32 V2.4 Z" fill="#dedede"/></svg>
<div class="b" style="left:382px;top:390px;width:2px;height:40px;background:linear-gradient(rgba(214,214,214,.25),#d4d4d4 70%);"></div>
<div class="b" style="left:844px;top:390px;width:2px;height:40px;background:linear-gradient(rgba(214,214,214,.25),#d4d4d4 70%);"></div>
<div class="b" style="left:1012px;top:390px;width:2px;height:40px;background:linear-gradient(rgba(214,214,214,.25),#d4d4d4 70%);"></div>
<div class="b" style="left:1118px;top:390px;width:2px;height:40px;background:linear-gradient(rgba(214,214,214,.25),#d4d4d4 70%);"></div>
<div class="b" style="left:1238px;top:390px;width:2px;height:40px;background:linear-gradient(rgba(214,214,214,.25),#d4d4d4 70%);"></div>
<div class="b" style="left:1344px;top:390px;width:2px;height:40px;background:linear-gradient(rgba(214,214,214,.25),#d4d4d4 70%);"></div>
<div class="b" style="left:1586px;top:390px;width:2px;height:40px;background:linear-gradient(rgba(214,214,214,.25),#d4d4d4 70%);"></div>
<div class="b" style="left:1816px;top:390px;width:2px;height:40px;background:linear-gradient(rgba(214,214,214,.25),#d4d4d4 70%);"></div>
<div class="b" style="left:2042px;top:390px;width:2px;height:40px;background:linear-gradient(rgba(214,214,214,.25),#d4d4d4 70%);"></div>
<div class="b" style="left:2346px;top:390px;width:2px;height:40px;background:linear-gradient(rgba(214,214,214,.25),#d4d4d4 70%);"></div>
<div class="b" style="left:2598px;top:390px;width:2px;height:40px;background:linear-gradient(rgba(214,214,214,.25),#d4d4d4 70%);"></div>
<div class="b" style="left:2704px;top:390px;width:2px;height:40px;background:linear-gradient(rgba(214,214,214,.25),#d4d4d4 70%);"></div>
<div class="b" style="left:2814px;top:390px;width:2px;height:40px;background:linear-gradient(rgba(214,214,214,.25),#d4d4d4 70%);"></div>
<div class="b" style="left:2814px;top:390px;width:2px;height:40px;background:linear-gradient(rgba(214,214,214,.25),#d4d4d4 70%);"></div>
<div class="b" style="left:0px;top:432px;width:44px;height:1270px;background:linear-gradient(90deg,#ffffff,#f9f9f9 50%,#f2f2f2);"></div>
<div class="b" style="left:0px;top:432px;width:44px;height:28.5px;background:linear-gradient(90deg,#f4f4f4,#eeeeee);"></div>
<div class="b" style="left:0px;top:460px;width:44px;height:2px;background:linear-gradient(90deg,rgba(215,215,215,0),#d6d6d6 75%);"></div>
<div class="b" style="left:0px;top:490px;width:44px;height:2px;background:linear-gradient(90deg,rgba(215,215,215,0),#d6d6d6 75%);"></div>
<div class="b" style="left:0px;top:520px;width:44px;height:2px;background:linear-gradient(90deg,rgba(215,215,215,0),#d6d6d6 75%);"></div>
<div class="b" style="left:0px;top:550px;width:44px;height:2px;background:linear-gradient(90deg,rgba(215,215,215,0),#d6d6d6 75%);"></div>
<div class="b" style="left:0px;top:580px;width:44px;height:2px;background:linear-gradient(90deg,rgba(215,215,215,0),#d6d6d6 75%);"></div>
<div class="b" style="left:0px;top:610px;width:44px;height:2px;background:linear-gradient(90deg,rgba(215,215,215,0),#d6d6d6 75%);"></div>
<div class="b" style="left:0px;top:640px;width:44px;height:2px;background:linear-gradient(90deg,rgba(215,215,215,0),#d6d6d6 75%);"></div>
<div class="b" style="left:0px;top:670px;width:44px;height:2px;background:linear-gradient(90deg,rgba(215,215,215,0),#d6d6d6 75%);"></div>
<div class="b" style="left:0px;top:700px;width:44px;height:2px;background:linear-gradient(90deg,rgba(215,215,215,0),#d6d6d6 75%);"></div>
<div class="b" style="left:0px;top:730px;width:44px;height:2px;background:linear-gradient(90deg,rgba(215,215,215,0),#d6d6d6 75%);"></div>
<div class="b" style="left:0px;top:760px;width:44px;height:2px;background:linear-gradient(90deg,rgba(215,215,215,0),#d6d6d6 75%);"></div>
<div class="b" style="left:0px;top:790px;width:44px;height:2px;background:linear-gradient(90deg,rgba(215,215,215,0),#d6d6d6 75%);"></div>
<div class="b" style="left:0px;top:820px;width:44px;height:2px;background:linear-gradient(90deg,rgba(215,215,215,0),#d6d6d6 75%);"></div>
<div class="b" style="left:0px;top:850px;width:44px;height:2px;background:linear-gradient(90deg,rgba(215,215,215,0),#d6d6d6 75%);"></div>
<div class="b" style="left:0px;top:880px;width:44px;height:2px;background:linear-gradient(90deg,rgba(215,215,215,0),#d6d6d6 75%);"></div>
<div class="b" style="left:0px;top:910px;width:44px;height:2px;background:linear-gradient(90deg,rgba(215,215,215,0),#d6d6d6 75%);"></div>
<div class="b" style="left:0px;top:940px;width:44px;height:2px;background:linear-gradient(90deg,rgba(215,215,215,0),#d6d6d6 75%);"></div>
<div class="b" style="left:0px;top:972px;width:44px;height:2px;background:linear-gradient(90deg,rgba(215,215,215,0),#d6d6d6 75%);"></div>
<div class="b" style="left:0px;top:1002px;width:44px;height:2px;background:linear-gradient(90deg,rgba(215,215,215,0),#d6d6d6 75%);"></div>
<div class="b" style="left:0px;top:1032px;width:44px;height:2px;background:linear-gradient(90deg,rgba(215,215,215,0),#d6d6d6 75%);"></div>
<div class="b" style="left:0px;top:1062px;width:44px;height:2px;background:linear-gradient(90deg,rgba(215,215,215,0),#d6d6d6 75%);"></div>
<div class="b" style="left:0px;top:1092px;width:44px;height:2px;background:linear-gradient(90deg,rgba(215,215,215,0),#d6d6d6 75%);"></div>
<div class="b" style="left:0px;top:1122px;width:44px;height:2px;background:linear-gradient(90deg,rgba(215,215,215,0),#d6d6d6 75%);"></div>
<div class="b" style="left:0px;top:1152px;width:44px;height:2px;background:linear-gradient(90deg,rgba(215,215,215,0),#d6d6d6 75%);"></div>
<div class="b" style="left:0px;top:1182px;width:44px;height:2px;background:linear-gradient(90deg,rgba(215,215,215,0),#d6d6d6 75%);"></div>
<div class="b" style="left:0px;top:1212px;width:44px;height:2px;background:linear-gradient(90deg,rgba(215,215,215,0),#d6d6d6 75%);"></div>
<div class="b" style="left:0px;top:1242px;width:44px;height:2px;background:linear-gradient(90deg,rgba(215,215,215,0),#d6d6d6 75%);"></div>
<div class="b" style="left:0px;top:1272px;width:44px;height:2px;background:linear-gradient(90deg,rgba(215,215,215,0),#d6d6d6 75%);"></div>
<div class="b" style="left:0px;top:1302px;width:44px;height:2px;background:linear-gradient(90deg,rgba(215,215,215,0),#d6d6d6 75%);"></div>
<div class="b" style="left:0px;top:1332px;width:44px;height:2px;background:linear-gradient(90deg,rgba(215,215,215,0),#d6d6d6 75%);"></div>
<div class="b" style="left:0px;top:1362px;width:44px;height:2px;background:linear-gradient(90deg,rgba(215,215,215,0),#d6d6d6 75%);"></div>
<div class="b" style="left:0px;top:1392px;width:44px;height:2px;background:linear-gradient(90deg,rgba(215,215,215,0),#d6d6d6 75%);"></div>
<div class="b" style="left:0px;top:1422px;width:44px;height:2px;background:linear-gradient(90deg,rgba(215,215,215,0),#d6d6d6 75%);"></div>
<div class="b" style="left:0px;top:1452px;width:44px;height:2px;background:linear-gradient(90deg,rgba(215,215,215,0),#d6d6d6 75%);"></div>
<div class="b" style="left:0px;top:1482px;width:44px;height:2px;background:linear-gradient(90deg,rgba(215,215,215,0),#d6d6d6 75%);"></div>
<div class="b" style="left:0px;top:1512px;width:44px;height:2px;background:linear-gradient(90deg,rgba(215,215,215,0),#d6d6d6 75%);"></div>
<div class="b" style="left:0px;top:1542px;width:44px;height:2px;background:linear-gradient(90deg,rgba(215,215,215,0),#d6d6d6 75%);"></div>
<div class="b" style="left:0px;top:1572px;width:44px;height:2px;background:linear-gradient(90deg,rgba(215,215,215,0),#d6d6d6 75%);"></div>
<div class="b" style="left:0px;top:1602px;width:44px;height:2px;background:linear-gradient(90deg,rgba(215,215,215,0),#d6d6d6 75%);"></div>
<div class="b" style="left:0px;top:1632px;width:44px;height:2px;background:linear-gradient(90deg,rgba(215,215,215,0),#d6d6d6 75%);"></div>
<div class="b" style="left:0px;top:1662px;width:44px;height:2px;background:linear-gradient(90deg,rgba(215,215,215,0),#d6d6d6 75%);"></div>
<div class="b" style="left:0px;top:1692px;width:44px;height:2px;background:linear-gradient(90deg,rgba(215,215,215,0),#d6d6d6 75%);"></div>
<div class="b" style="left:44px;top:388px;width:2px;height:1314px;background:#bcbcbc;"></div>
<div class="b" style="left:46px;top:460px;width:2834px;height:2px;background:#d1d1d1;"></div>
<div class="b" style="left:46px;top:490px;width:2834px;height:2px;background:#d1d1d1;"></div>
<div class="b" style="left:46px;top:520px;width:2834px;height:2px;background:#d1d1d1;"></div>
<div class="b" style="left:46px;top:550px;width:2834px;height:2px;background:#d1d1d1;"></div>
<div class="b" style="left:46px;top:580px;width:2834px;height:2px;background:#d1d1d1;"></div>
<div class="b" style="left:46px;top:610px;width:2834px;height:2px;background:#d1d1d1;"></div>
<div class="b" style="left:46px;top:640px;width:2834px;height:2px;background:#d1d1d1;"></div>
<div class="b" style="left:46px;top:670px;width:2834px;height:2px;background:#d1d1d1;"></div>
<div class="b" style="left:46px;top:700px;width:2834px;height:2px;background:#d1d1d1;"></div>
<div class="b" style="left:46px;top:730px;width:2834px;height:2px;background:#d1d1d1;"></div>
<div class="b" style="left:46px;top:760px;width:2834px;height:2px;background:#d1d1d1;"></div>
<div class="b" style="left:46px;top:790px;width:2834px;height:2px;background:#d1d1d1;"></div>
<div class="b" style="left:46px;top:820px;width:2834px;height:2px;background:#d1d1d1;"></div>
<div class="b" style="left:46px;top:850px;width:2834px;height:2px;background:#d1d1d1;"></div>
<div class="b" style="left:46px;top:880px;width:2834px;height:2px;background:#d1d1d1;"></div>
<div class="b" style="left:46px;top:910px;width:2834px;height:2px;background:#d1d1d1;"></div>
<div class="b" style="left:46px;top:940px;width:2834px;height:2px;background:#d1d1d1;"></div>
<div class="b" style="left:46px;top:972px;width:2834px;height:2px;background:#d1d1d1;"></div>
<div class="b" style="left:46px;top:1002px;width:2834px;height:2px;background:#d1d1d1;"></div>
<div class="b" style="left:46px;top:1032px;width:2834px;height:2px;background:#d1d1d1;"></div>
<div class="b" style="left:46px;top:1062px;width:2834px;height:2px;background:#d1d1d1;"></div>
<div class="b" style="left:46px;top:1092px;width:2834px;height:2px;background:#d1d1d1;"></div>
<div class="b" style="left:46px;top:1122px;width:2834px;height:2px;background:#d1d1d1;"></div>
<div class="b" style="left:46px;top:1152px;width:2834px;height:2px;background:#d1d1d1;"></div>
<div class="b" style="left:46px;top:1182px;width:2834px;height:2px;background:#d1d1d1;"></div>
<div class="b" style="left:46px;top:1212px;width:2834px;height:2px;background:#d1d1d1;"></div>
<div class="b" style="left:46px;top:1242px;width:2834px;height:2px;background:#d1d1d1;"></div>
<div class="b" style="left:46px;top:1272px;width:2834px;height:2px;background:#d1d1d1;"></div>
<div class="b" style="left:46px;top:1302px;width:2834px;height:2px;background:#d1d1d1;"></div>
<div class="b" style="left:46px;top:1332px;width:2834px;height:2px;background:#d1d1d1;"></div>
<div class="b" style="left:46px;top:1362px;width:2834px;height:2px;background:#d1d1d1;"></div>
<div class="b" style="left:46px;top:1392px;width:2834px;height:2px;background:#d1d1d1;"></div>
<div class="b" style="left:46px;top:1422px;width:2834px;height:2px;background:#d1d1d1;"></div>
<div class="b" style="left:46px;top:1452px;width:2834px;height:2px;background:#d1d1d1;"></div>
<div class="b" style="left:46px;top:1482px;width:2834px;height:2px;background:#d1d1d1;"></div>
<div class="b" style="left:46px;top:1512px;width:2834px;height:2px;background:#d1d1d1;"></div>
<div class="b" style="left:46px;top:1542px;width:2834px;height:2px;background:#d1d1d1;"></div>
<div class="b" style="left:46px;top:1572px;width:2834px;height:2px;background:#d1d1d1;"></div>
<div class="b" style="left:46px;top:1602px;width:2834px;height:2px;background:#d1d1d1;"></div>
<div class="b" style="left:46px;top:1632px;width:2834px;height:2px;background:#d1d1d1;"></div>
<div class="b" style="left:46px;top:1662px;width:2834px;height:2px;background:#d1d1d1;"></div>
<div class="b" style="left:46px;top:1692px;width:2834px;height:2px;background:#d1d1d1;"></div>
<div class="b" style="left:382px;top:432px;width:2px;height:1270px;background:#d1d1d1;"></div>
<div class="b" style="left:844px;top:432px;width:2px;height:1270px;background:#d1d1d1;"></div>
<div class="b" style="left:1012px;top:432px;width:2px;height:1270px;background:#d1d1d1;"></div>
<div class="b" style="left:1118px;top:432px;width:2px;height:1270px;background:#d1d1d1;"></div>
<div class="b" style="left:1238px;top:432px;width:2px;height:1270px;background:#d1d1d1;"></div>
<div class="b" style="left:1344px;top:432px;width:2px;height:1270px;background:#d1d1d1;"></div>
<div class="b" style="left:1586px;top:432px;width:2px;height:1270px;background:#d1d1d1;"></div>
<div class="b" style="left:1816px;top:432px;width:2px;height:1270px;background:#d1d1d1;"></div>
<div class="b" style="left:2042px;top:432px;width:2px;height:1270px;background:#d1d1d1;"></div>
<div class="b" style="left:2346px;top:432px;width:2px;height:1270px;background:#d1d1d1;"></div>
<div class="b" style="left:2598px;top:432px;width:2px;height:1270px;background:#d1d1d1;"></div>
<div class="b" style="left:2704px;top:432px;width:2px;height:1270px;background:#d1d1d1;"></div>
<div class="b" style="left:2814px;top:432px;width:2px;height:1270px;background:#d1d1d1;"></div>
<div class="b" style="left:1240px;top:492px;width:1464px;height:58px;background:#fff;"></div>
<div class="b" style="left:1120px;top:642px;width:1694px;height:118px;background:#fff;"></div>
<div class="b" style="left:1240px;top:974px;width:802px;height:28px;background:#fff;"></div>
<div class="b" style="left:1346px;top:1304px;width:696px;height:28px;background:#fff;"></div>
<div class="b" style="left:1120px;top:1664px;width:1226px;height:28px;background:#fff;"></div>
<div class="b" style="left:46px;top:1034px;width:798px;height:28px;background:#fff;"></div>
<div class="b" style="left:1346px;top:1124px;width:470px;height:28px;background:#fff;"></div>
<div class="b" style="left:1346px;top:1424px;width:470px;height:28px;background:#fff;"></div>
<div class="b" style="left:46px;top:432px;width:796px;height:538px;background:#fbe6a3;box-shadow:inset -1px -1px 0 #fff2b4;"></div>
<div class="b" style="left:846px;top:432px;width:1px;height:543px;background:#fff;"></div>
<div class="b" style="left:46px;top:974px;width:801px;height:1px;background:#fff;"></div>
<div class="b" style="left:842px;top:432px;width:4px;height:542px;background:#000;"></div>
<div class="b" style="left:46px;top:970px;width:800px;height:4px;background:#000;"></div>
<div class="b" style="left:42px;top:432px;width:4px;height:30px;background:#38744a;"></div>
<div class="b" style="left:1820px;top:434px;width:224px;height:24px;background:#c7c7c7;"></div>
<div class="b" style="left:2042px;top:434px;width:2px;height:24px;background:#b5b5b5;"></div>
<div class="b" style="left:1814px;top:428px;width:536px;height:4px;background:#377348;"></div>
<div class="b" style="left:1814px;top:428px;width:4px;height:36px;background:#377348;"></div>
<div class="b" style="left:1814px;top:460px;width:526px;height:4px;background:#377348;"></div>
<div class="b" style="left:2346px;top:428px;width:4px;height:26px;background:#377348;"></div>
<div class="b" style="left:2340px;top:454px;width:14px;height:14px;background:#fff;"></div>
<div class="b" style="left:2342px;top:456px;width:10px;height:10px;background:#377348;"></div>
<div class="b" style="left:2860px;top:436px;width:14.5px;height:702px;background:rgba(236,236,236,.86);border-radius:7px;"></div>
<div class="b" style="left:50.5px;top:1682.5px;width:2372px;height:13.5px;background:rgba(236,236,236,.88);border-radius:7px;"></div>
<div class="b" style="left:0px;top:1702px;width:2880px;height:52px;background:#f0f0f0;"></div>
<div class="b" style="left:0px;top:1702px;width:2880px;height:2px;background:#c9c9c9;"></div>
<div class="b" style="left:121.2px;top:1702px;width:211.8px;height:44.4px;background:#fff;border-radius:0 0 5.5px 5.5px;border:1.2px solid #c2c2c2;border-top:none;box-sizing:border-box;box-shadow:0 1.2px 2px rgba(0,0,0,.32);"></div>
<div class="b" style="left:122.4px;top:1700px;width:209.4px;height:6px;background:#fff;"></div>
<svg class="b" style="left:28px;top:1716px;" width="18" height="26" viewBox="0 0 18 26"><path d="M16 3 V23 L2.4 13 Z" fill="#bdbdbd"/></svg>
<svg class="b" style="left:74px;top:1716px;" width="18" height="26" viewBox="0 0 18 26"><path d="M2 3 V23 L15.6 13 Z" fill="#bdbdbd"/></svg>
<div class="b" style="left:724.5px;top:1704px;width:1.6px;height:40px;background:#cdcdcd;"></div>
<div class="b" style="left:800.8px;top:1704px;width:1.6px;height:40px;background:#cdcdcd;"></div>
<svg class="b" style="left:752px;top:1716px;" width="24" height="24" viewBox="0 0 24 24"><path d="M12 2.4 V21.2 M2.6 11.8 H21.4" stroke="#3c3c3c" stroke-width="3.6"/></svg>
<div class="b" style="left:0px;top:1754px;width:2880px;height:46px;background:linear-gradient(#e6e6e6,#d2d2d2);"></div>
<div class="b" style="left:0px;top:1752.6px;width:2880px;height:2px;background:#a9a9a9;"></div>
<div class="b" style="left:2242px;top:1754.6px;width:74px;height:45.4px;background:#a6a6a6;"></div>
<svg class="b" style="left:2264px;top:1762px;" width="30" height="30" viewBox="0 0 30 30"><rect x="2" y="2" width="26" height="25.6" rx="2" fill="#fff"/>
<path d="M10 2 V27.6 M19 2 V27.6 M2 10.4 H28 M2 19 H28" stroke="#a6a6a6" stroke-width="2"/></svg>
<svg class="b" style="left:2335px;top:1762px;" width="32" height="30" viewBox="0 0 32 30"><rect x="3" y="3" width="26" height="24.6" rx="1.6" fill="none" stroke="#6a6a6a" stroke-width="2.2"/>
<rect x="9" y="8.4" width="14" height="14" fill="none" stroke="#6a6a6a" stroke-width="2"/><path d="M12 13 H20 M12 17.2 H20" stroke="#6a6a6a" stroke-width="1.8"/></svg>
<svg class="b" style="left:2406px;top:1762px;" width="32" height="30" viewBox="0 0 32 30"><rect x="3" y="3" width="26" height="24.6" rx="1.6" fill="none" stroke="#6a6a6a" stroke-width="2.2"/>
<path d="M3 17 H17.6 V3 M10.4 3 V17" fill="none" stroke="#6a6a6a" stroke-width="2"/></svg>
<div class="b" style="left:2474px;top:1775px;width:16px;height:4.6px;background:#666;border-radius:1px;"></div>
<div class="b" style="left:2504px;top:1773.4px;width:200px;height:8.6px;background:#9a9a9a;border-radius:4.3px;"></div>
<div class="b" style="left:2587.8px;top:1761px;width:32px;height:32px;background:#fff;border-radius:50%;box-shadow:0 1px 3px rgba(0,0,0,.35),0 0 1px rgba(0,0,0,.3);"></div>
<svg class="b" style="left:2716px;top:1767px;" width="20" height="20" viewBox="0 0 20 20"><path d="M10 2 V18 M2 10 H18" stroke="#666" stroke-width="4"/></svg>
<span class="t" style="left:1397.00px;top:28.14px;font-size:27px;line-height:27px;color:#e4ece6;font-weight:700;transform:scaleX(1.0694);">225Pr (2)</span>
<span class="t" style="left:2484.00px;top:28.44px;font-size:25px;line-height:25px;color:#8cad96;-webkit-text-stroke:0.8px #8cad96;transform:scaleX(1.0165);">Search Sheet</span>
<span class="t" style="left:45.00px;top:87.99px;font-size:26px;line-height:26px;color:#2f7347;font-weight:700;transform:scaleX(1.0104);">Home</span>
<span class="t" style="left:170.00px;top:87.99px;font-size:26px;line-height:26px;color:#dbe7de;-webkit-text-stroke:0.95px #dbe7de;transform:scaleX(1.1148);">Insert</span>
<span class="t" style="left:294.00px;top:87.99px;font-size:26px;line-height:26px;color:#dbe7de;-webkit-text-stroke:0.95px #dbe7de;transform:scaleX(1.0549);">Draw</span>
<span class="t" style="left:410.00px;top:87.99px;font-size:26px;line-height:26px;color:#dbe7de;-webkit-text-stroke:0.95px #dbe7de;transform:scaleX(1.0444);">Page Layout</span>
<span class="t" style="left:616.00px;top:87.99px;font-size:26px;line-height:26px;color:#dbe7de;-webkit-text-stroke:0.95px #dbe7de;transform:scaleX(1.0613);">Formulas</span>
<span class="t" style="left:784.00px;top:87.99px;font-size:26px;line-height:26px;color:#dbe7de;-webkit-text-stroke:0.95px #dbe7de;transform:scaleX(1.0560);">Data</span>
<span class="t" style="left:894.00px;top:87.99px;font-size:26px;line-height:26px;color:#dbe7de;-webkit-text-stroke:0.95px #dbe7de;transform:scaleX(1.0323);">Review</span>
<span class="t" style="left:1035.50px;top:87.99px;font-size:26px;line-height:26px;color:#dbe7de;-webkit-text-stroke:0.95px #dbe7de;transform:scaleX(1.0914);">View</span>
<span class="t" style="left:1150.00px;top:87.99px;font-size:26px;line-height:26px;color:#dbe7de;-webkit-text-stroke:0.95px #dbe7de;transform:scaleX(1.0668);">Data Mining</span>
<span class="t" style="left:1349.50px;top:87.99px;font-size:26px;line-height:26px;color:#dbe7de;-webkit-text-stroke:0.95px #dbe7de;transform:scaleX(1.0845);">Analytic Solver</span>
<span class="t" style="left:2732.00px;top:84.99px;font-size:26px;line-height:26px;color:#dbe7de;-webkit-text-stroke:0.95px #dbe7de;transform:scaleX(1.0376);">Share</span>
<span class="t" style="left:36.50px;top:214.02px;font-size:21px;line-height:21px;color:#1c1c1c;-webkit-text-stroke:0.3px #1c1c1c;transform:scaleX(1.0241);">Paste</span>
<span class="t" style="left:174.50px;top:139.72px;font-size:21px;line-height:21px;color:#1c1c1c;-webkit-text-stroke:0.3px #1c1c1c;transform:scaleX(1.0554);">Cut</span>
<span class="t" style="left:174.50px;top:185.22px;font-size:21px;line-height:21px;color:#1c1c1c;-webkit-text-stroke:0.3px #1c1c1c;transform:scaleX(1.0402);">Copy</span>
<span class="t" style="left:174.50px;top:231.82px;font-size:21px;line-height:21px;color:#1c1c1c;-webkit-text-stroke:0.3px #1c1c1c;transform:scaleX(1.0599);">Format</span>
<span class="t" style="left:300.00px;top:151.21px;font-size:25.5px;line-height:25.5px;color:#111;-webkit-text-stroke:0.3px #111;transform:scaleX(0.9970);">Calibri (Body)</span>
<span class="t" style="left:517.50px;top:151.21px;font-size:25.5px;line-height:25.5px;color:#111;-webkit-text-stroke:0.3px #111;transform:scaleX(0.8684);">11</span>
<span class="t" style="left:633.00px;top:150.87px;font-size:28.5px;line-height:28.5px;color:#3a3a3a;-webkit-text-stroke:0.7px #3a3a3a;transform:scaleX(1.1569);">A</span>
<span class="t" style="left:693.00px;top:154.68px;font-size:24px;line-height:24px;color:#3a3a3a;-webkit-text-stroke:0.6px #3a3a3a;transform:scaleX(1.1114);">A</span>
<span class="t" style="left:311.00px;top:212.94px;font-size:27px;line-height:27px;color:#2a2a2a;font-weight:700;transform:scaleX(0.9538);">B</span>
<span class="t" style="left:369.60px;top:211.09px;font-size:29.5px;line-height:29.5px;color:#2a2a2a;font-weight:700;font-family:'Liberation Serif';font-style:italic;transform:scaleX(1.3497);">I</span>
<span class="t" style="left:426.30px;top:212.87px;font-size:25.2px;line-height:25.2px;color:#2a2a2a;-webkit-text-stroke:0.5px #2a2a2a;transform:scaleX(1.0438);">U</span>
<span class="t" style="left:677.00px;top:207.27px;font-size:26.5px;line-height:26.5px;color:#333;-webkit-text-stroke:0.6px #333;transform:scaleX(1.2438);">A</span>
<span class="t" style="left:1168.00px;top:156.02px;font-size:21px;line-height:21px;color:#1c1c1c;-webkit-text-stroke:0.3px #1c1c1c;transform:scaleX(1.0772);">Wrap Text</span>
<span class="t" style="left:1168.00px;top:216.42px;font-size:21px;line-height:21px;color:#1c1c1c;-webkit-text-stroke:0.3px #1c1c1c;transform:scaleX(1.0726);">Merge &amp; Center</span>
<span class="t" style="left:1401.00px;top:151.48px;font-size:24px;line-height:24px;color:#111;-webkit-text-stroke:0.3px #111;transform:scaleX(1.0306);">General</span>
<span class="t" style="left:1405.80px;top:211.16px;font-size:31px;line-height:31px;color:#3a3a3a;-webkit-text-stroke:0.25px #3a3a3a;transform:scaleX(1.0435);">$</span>
<span class="t" style="left:1481.40px;top:210.27px;font-size:33px;line-height:33px;color:#3a3a3a;transform:scaleX(0.9372);">%</span>
<span class="t" style="left:1623.10px;top:210.28px;font-size:15.5px;line-height:15.5px;color:#333;transform:scaleX(1.1208);">.0</span>
<span class="t" style="left:1613.10px;top:226.48px;font-size:15.5px;line-height:15.5px;color:#333;transform:scaleX(1.1362);">.00</span>
<span class="t" style="left:1671.10px;top:210.28px;font-size:15.5px;line-height:15.5px;color:#333;transform:scaleX(1.1362);">.00</span>
<span class="t" style="left:1681.10px;top:226.48px;font-size:15.5px;line-height:15.5px;color:#333;transform:scaleX(1.1208);">.0</span>
<span class="t" style="left:1745.50px;top:214.62px;font-size:21px;line-height:21px;color:#1c1c1c;-webkit-text-stroke:0.3px #1c1c1c;transform:scaleX(1.0849);">Conditional</span>
<span class="t" style="left:1747.00px;top:238.42px;font-size:21px;line-height:21px;color:#1c1c1c;-webkit-text-stroke:0.3px #1c1c1c;transform:scaleX(1.1009);">Formatting</span>
<span class="t" style="left:1879.50px;top:214.62px;font-size:21px;line-height:21px;color:#1c1c1c;-webkit-text-stroke:0.3px #1c1c1c;transform:scaleX(1.0749);">Format</span>
<span class="t" style="left:1874.00px;top:238.42px;font-size:21px;line-height:21px;color:#1c1c1c;-webkit-text-stroke:0.3px #1c1c1c;transform:scaleX(1.0662);">as Table</span>
<span class="t" style="left:1999.50px;top:214.62px;font-size:21px;line-height:21px;color:#1c1c1c;-webkit-text-stroke:0.3px #1c1c1c;transform:scaleX(1.0639);">Cell</span>
<span class="t" style="left:1987.50px;top:238.42px;font-size:21px;line-height:21px;color:#1c1c1c;-webkit-text-stroke:0.3px #1c1c1c;transform:scaleX(1.0929);">Styles</span>
<span class="t" style="left:2117.50px;top:214.62px;font-size:21px;line-height:21px;color:#1c1c1c;-webkit-text-stroke:0.3px #1c1c1c;transform:scaleX(1.0946);">Insert</span>
<span class="t" style="left:2218.00px;top:214.62px;font-size:21px;line-height:21px;color:#1c1c1c;-webkit-text-stroke:0.3px #1c1c1c;transform:scaleX(1.0625);">Delete</span>
<span class="t" style="left:2318.00px;top:214.62px;font-size:21px;line-height:21px;color:#1c1c1c;-webkit-text-stroke:0.3px #1c1c1c;transform:scaleX(1.0674);">Format</span>
<span class="t" style="left:2490.50px;top:140.02px;font-size:21px;line-height:21px;color:#1c1c1c;-webkit-text-stroke:0.3px #1c1c1c;transform:scaleX(1.0534);">AutoSum</span>
<span class="t" style="left:2490.50px;top:185.52px;font-size:21px;line-height:21px;color:#1c1c1c;-webkit-text-stroke:0.3px #1c1c1c;transform:scaleX(1.0250);">Fill</span>
<span class="t" style="left:2490.50px;top:231.52px;font-size:21px;line-height:21px;color:#1c1c1c;-webkit-text-stroke:0.3px #1c1c1c;transform:scaleX(1.0361);">Clear</span>
<span class="t" style="left:2626.50px;top:145.05px;font-size:29px;line-height:29px;color:#4484dc;-webkit-text-stroke:0.8px #4484dc;transform:scaleX(1.2407);">A</span>
<span class="t" style="left:2629.00px;top:171.25px;font-size:29px;line-height:29px;color:#777;-webkit-text-stroke:0.8px #777;transform:scaleX(1.1287);">Z</span>
<span class="t" style="left:2633.00px;top:213.82px;font-size:21px;line-height:21px;color:#1c1c1c;-webkit-text-stroke:0.3px #1c1c1c;transform:scaleX(1.0795);">Sort &amp;</span>
<span class="t" style="left:2639.50px;top:237.52px;font-size:21px;line-height:21px;color:#1c1c1c;-webkit-text-stroke:0.3px #1c1c1c;transform:scaleX(1.0820);">Filter</span>
<span class="t" style="left:2735.00px;top:213.82px;font-size:21px;line-height:21px;color:#1c1c1c;-webkit-text-stroke:0.3px #1c1c1c;transform:scaleX(1.0543);">Find &amp;</span>
<span class="t" style="left:2735.00px;top:237.52px;font-size:21px;line-height:21px;color:#1c1c1c;-webkit-text-stroke:0.3px #1c1c1c;transform:scaleX(1.0964);">Select</span>
<span class="t" style="left:64.00px;top:288.18px;font-size:24px;line-height:24px;color:#222;-webkit-text-stroke:0.8px #222;transform:scaleX(1.0537);">Open </span>
<span class="t" style="left:132.90px;top:288.18px;font-size:24px;line-height:24px;color:#222;-webkit-text-stroke:0.8px #222;transform:scaleX(1.0777);">recovered </span>
<span class="t" style="left:255.10px;top:288.18px;font-size:24px;line-height:24px;color:#222;-webkit-text-stroke:0.8px #222;transform:scaleX(1.0823);">workbooks?</span>
<span class="t" style="left:411.50px;top:288.18px;font-size:24px;line-height:24px;color:#222;-webkit-text-stroke:0.3px #222;transform:scaleX(1.0114);">Your </span>
<span class="t" style="left:467.30px;top:288.18px;font-size:24px;line-height:24px;color:#222;-webkit-text-stroke:0.3px #222;transform:scaleX(1.0862);">recent </span>
<span class="t" style="left:547.00px;top:288.18px;font-size:24px;line-height:24px;color:#222;-webkit-text-stroke:0.3px #222;transform:scaleX(1.0605);">changes </span>
<span class="t" style="left:650.30px;top:288.18px;font-size:24px;line-height:24px;color:#222;-webkit-text-stroke:0.3px #222;transform:scaleX(1.0360);">were </span>
<span class="t" style="left:711.10px;top:288.18px;font-size:24px;line-height:24px;color:#222;-webkit-text-stroke:0.3px #222;transform:scaleX(1.0415);">saved. </span>
<span class="t" style="left:791.70px;top:288.18px;font-size:24px;line-height:24px;color:#222;-webkit-text-stroke:0.3px #222;transform:scaleX(1.0279);">Do </span>
<span class="t" style="left:830.10px;top:288.18px;font-size:24px;line-height:24px;color:#222;-webkit-text-stroke:0.3px #222;transform:scaleX(1.0645);">you </span>
<span class="t" style="left:878.40px;top:288.18px;font-size:24px;line-height:24px;color:#222;-webkit-text-stroke:0.3px #222;transform:scaleX(1.0458);">want </span>
<span class="t" style="left:938.40px;top:288.18px;font-size:24px;line-height:24px;color:#222;-webkit-text-stroke:0.3px #222;transform:scaleX(1.0829);">to </span>
<span class="t" style="left:967.30px;top:288.18px;font-size:24px;line-height:24px;color:#222;-webkit-text-stroke:0.3px #222;transform:scaleX(1.0821);">continue </span>
<span class="t" style="left:1072.70px;top:288.18px;font-size:24px;line-height:24px;color:#222;-webkit-text-stroke:0.3px #222;transform:scaleX(1.0719);">working </span>
<span class="t" style="left:1168.50px;top:288.18px;font-size:24px;line-height:24px;color:#222;-webkit-text-stroke:0.3px #222;transform:scaleX(1.0493);">where </span>
<span class="t" style="left:1244.10px;top:288.18px;font-size:24px;line-height:24px;color:#222;-webkit-text-stroke:0.3px #222;transform:scaleX(1.0490);">you </span>
<span class="t" style="left:1291.70px;top:288.18px;font-size:24px;line-height:24px;color:#222;-webkit-text-stroke:0.3px #222;transform:scaleX(1.1218);">left </span>
<span class="t" style="left:1335.10px;top:288.18px;font-size:24px;line-height:24px;color:#222;-webkit-text-stroke:0.3px #222;transform:scaleX(1.1336);">off?</span>
<span class="t" style="left:2717.50px;top:287.68px;font-size:24px;line-height:24px;color:#222;transform:scaleX(1.0215);">Yes</span>
<span class="t" style="left:2813.50px;top:287.68px;font-size:24px;line-height:24px;color:#222;transform:scaleX(1.0102);">No</span>
<span class="t" style="left:18.50px;top:343.61px;font-size:23.5px;line-height:23.5px;color:#3a3a3a;transform:scaleX(0.9465);">J1</span>
<span class="t" style="left:318.00px;top:338.12px;font-size:31.5px;line-height:31.5px;color:#444;font-family:'Liberation Serif';font-style:italic;transform:scaleX(1.7112);">f</span>
<span class="t" style="left:330.50px;top:341.89px;font-size:27px;line-height:27px;color:#444;font-family:'Liberation Serif';font-style:italic;transform:scaleX(1.1265);">x</span>
<span class="t" style="left:207.72px;top:400.12px;font-size:19px;line-height:19px;color:#555;-webkit-text-stroke:0.35px #555;transform:scaleX(0.9900);">A</span>
<span class="t" style="left:607.66px;top:400.12px;font-size:19px;line-height:19px;color:#555;-webkit-text-stroke:0.35px #555;">B</span>
<span class="t" style="left:922.68px;top:400.12px;font-size:19px;line-height:19px;color:#555;-webkit-text-stroke:0.35px #555;transform:scaleX(0.9200);">C</span>
<span class="t" style="left:1059.41px;top:400.12px;font-size:19px;line-height:19px;color:#555;-webkit-text-stroke:0.35px #555;transform:scaleX(0.9600);">D</span>
<span class="t" style="left:1172.97px;top:400.12px;font-size:19px;line-height:19px;color:#555;-webkit-text-stroke:0.35px #555;transform:scaleX(0.9500);">E</span>
<span class="t" style="left:1286.89px;top:400.12px;font-size:19px;line-height:19px;color:#555;-webkit-text-stroke:0.35px #555;transform:scaleX(0.8800);">F</span>
<span class="t" style="left:1458.98px;top:400.12px;font-size:19px;line-height:19px;color:#555;-webkit-text-stroke:0.35px #555;transform:scaleX(0.9500);">G</span>
<span class="t" style="left:1695.20px;top:400.12px;font-size:19px;line-height:19px;color:#555;-webkit-text-stroke:0.35px #555;transform:scaleX(0.9900);">H</span>
<span class="t" style="left:1927.36px;top:400.12px;font-size:19px;line-height:19px;color:#2e7046;-webkit-text-stroke:0.35px #2e7046;">I</span>
<span class="t" style="left:2191.20px;top:400.12px;font-size:19px;line-height:19px;color:#2e7046;-webkit-text-stroke:0.35px #2e7046;transform:scaleX(0.8000);">J</span>
<span class="t" style="left:2467.54px;top:400.12px;font-size:19px;line-height:19px;color:#555;-webkit-text-stroke:0.35px #555;transform:scaleX(0.8600);">K</span>
<span class="t" style="left:2646.71px;top:400.12px;font-size:19px;line-height:19px;color:#555;-webkit-text-stroke:0.35px #555;">L</span>
<span class="t" style="left:2750.03px;top:400.12px;font-size:19px;line-height:19px;color:#555;-webkit-text-stroke:0.35px #555;transform:scaleX(1.2600);">M</span>
<span class="t" style="left:16.89px;top:438.76px;font-size:18px;line-height:18px;color:#2e7046;-webkit-text-stroke:0.25px #2e7046;transform:scaleX(1.0200);clip-path:inset(-10px -10px 0px -10px);">1</span>
<span class="t" style="left:16.89px;top:468.76px;font-size:18px;line-height:18px;color:#505050;-webkit-text-stroke:0.25px #505050;transform:scaleX(1.0200);clip-path:inset(-10px -10px 0px -10px);">2</span>
<span class="t" style="left:16.89px;top:498.76px;font-size:18px;line-height:18px;color:#505050;-webkit-text-stroke:0.25px #505050;transform:scaleX(1.0200);clip-path:inset(-10px -10px 0px -10px);">3</span>
<span class="t" style="left:16.89px;top:528.76px;font-size:18px;line-height:18px;color:#505050;-webkit-text-stroke:0.25px #505050;transform:scaleX(1.0200);clip-path:inset(-10px -10px 0px -10px);">4</span>
<span class="t" style="left:16.89px;top:558.76px;font-size:18px;line-height:18px;color:#505050;-webkit-text-stroke:0.25px #505050;transform:scaleX(1.0200);clip-path:inset(-10px -10px 0px -10px);">5</span>
<span class="t" style="left:16.89px;top:588.76px;font-size:18px;line-height:18px;color:#505050;-webkit-text-stroke:0.25px #505050;transform:scaleX(1.0200);clip-path:inset(-10px -10px 0px -10px);">6</span>
<span class="t" style="left:16.89px;top:618.76px;font-size:18px;line-height:18px;color:#505050;-webkit-text-stroke:0.25px #505050;transform:scaleX(1.0200);clip-path:inset(-10px -10px 0px -10px);">7</span>
<span class="t" style="left:16.89px;top:648.76px;font-size:18px;line-height:18px;color:#505050;-webkit-text-stroke:0.25px #505050;transform:scaleX(1.0200);clip-path:inset(-10px -10px 0px -10px);">8</span>
<span class="t" style="left:16.89px;top:678.76px;font-size:18px;line-height:18px;color:#505050;-webkit-text-stroke:0.25px #505050;transform:scaleX(1.0200);clip-path:inset(-10px -10px 0px -10px);">9</span>
<span class="t" style="left:11.78px;top:708.76px;font-size:18px;line-height:18px;color:#505050;-webkit-text-stroke:0.25px #505050;transform:scaleX(1.0200);clip-path:inset(-10px -10px 0px -10px);">10</span>
<span class="t" style="left:12.47px;top:738.76px;font-size:18px;line-height:18px;color:#505050;-webkit-text-stroke:0.25px #505050;transform:scaleX(1.0200);clip-path:inset(-10px -10px 0px -10px);">11</span>
<span class="t" style="left:11.78px;top:768.76px;font-size:18px;line-height:18px;color:#505050;-webkit-text-stroke:0.25px #505050;transform:scaleX(1.0200);clip-path:inset(-10px -10px 0px -10px);">12</span>
<span class="t" style="left:11.78px;top:798.76px;font-size:18px;line-height:18px;color:#505050;-webkit-text-stroke:0.25px #505050;transform:scaleX(1.0200);clip-path:inset(-10px -10px 0px -10px);">13</span>
<span class="t" style="left:11.78px;top:828.76px;font-size:18px;line-height:18px;color:#505050;-webkit-text-stroke:0.25px #505050;transform:scaleX(1.0200);clip-path:inset(-10px -10px 0px -10px);">14</span>
<span class="t" style="left:11.78px;top:858.76px;font-size:18px;line-height:18px;color:#505050;-webkit-text-stroke:0.25px #505050;transform:scaleX(1.0200);clip-path:inset(-10px -10px 0px -10px);">15</span>
<span class="t" style="left:11.78px;top:888.76px;font-size:18px;line-height:18px;color:#505050;-webkit-text-stroke:0.25px #505050;transform:scaleX(1.0200);clip-path:inset(-10px -10px 0px -10px);">16</span>
<span class="t" style="left:11.78px;top:918.76px;font-size:18px;line-height:18px;color:#505050;-webkit-text-stroke:0.25px #505050;transform:scaleX(1.0200);clip-path:inset(-10px -10px 0px -10px);">17</span>
<span class="t" style="left:11.78px;top:948.76px;font-size:18px;line-height:18px;color:#505050;-webkit-text-stroke:0.25px #505050;transform:scaleX(1.0200);clip-path:inset(-10px -10px 0px -10px);">18</span>
<span class="t" style="left:11.78px;top:980.76px;font-size:18px;line-height:18px;color:#505050;-webkit-text-stroke:0.25px #505050;transform:scaleX(1.0200);clip-path:inset(-10px -10px 0px -10px);">19</span>
<span class="t" style="left:11.78px;top:1010.76px;font-size:18px;line-height:18px;color:#505050;-webkit-text-stroke:0.25px #505050;transform:scaleX(1.0200);clip-path:inset(-10px -10px 0px -10px);">20</span>
<span class="t" style="left:11.78px;top:1040.76px;font-size:18px;line-height:18px;color:#505050;-webkit-text-stroke:0.25px #505050;transform:scaleX(1.0200);clip-path:inset(-10px -10px 0px -10px);">21</span>
<span class="t" style="left:11.78px;top:1070.76px;font-size:18px;line-height:18px;color:#505050;-webkit-text-stroke:0.25px #505050;transform:scaleX(1.0200);clip-path:inset(-10px -10px 0px -10px);">22</span>
<span class="t" style="left:11.78px;top:1100.76px;font-size:18px;line-height:18px;color:#505050;-webkit-text-stroke:0.25px #505050;transform:scaleX(1.0200);clip-path:inset(-10px -10px 0px -10px);">23</span>
<span class="t" style="left:11.78px;top:1130.76px;font-size:18px;line-height:18px;color:#505050;-webkit-text-stroke:0.25px #505050;transform:scaleX(1.0200);clip-path:inset(-10px -10px 0px -10px);">24</span>
<span class="t" style="left:11.78px;top:1160.76px;font-size:18px;line-height:18px;color:#505050;-webkit-text-stroke:0.25px #505050;transform:scaleX(1.0200);clip-path:inset(-10px -10px 0px -10px);">25</span>
<span class="t" style="left:11.78px;top:1190.76px;font-size:18px;line-height:18px;color:#505050;-webkit-text-stroke:0.25px #505050;transform:scaleX(1.0200);clip-path:inset(-10px -10px 0px -10px);">26</span>
<span class="t" style="left:11.78px;top:1220.76px;font-size:18px;line-height:18px;color:#505050;-webkit-text-stroke:0.25px #505050;transform:scaleX(1.0200);clip-path:inset(-10px -10px 0px -10px);">27</span>
<span class="t" style="left:11.78px;top:1250.76px;font-size:18px;line-height:18px;color:#505050;-webkit-text-stroke:0.25px #505050;transform:scaleX(1.0200);clip-path:inset(-10px -10px 0px -10px);">28</span>
<span class="t" style="left:11.78px;top:1280.76px;font-size:18px;line-height:18px;color:#505050;-webkit-text-stroke:0.25px #505050;transform:scaleX(1.0200);clip-path:inset(-10px -10px 0px -10px);">29</span>
<span class="t" style="left:11.78px;top:1310.76px;font-size:18px;line-height:18px;color:#505050;-webkit-text-stroke:0.25px #505050;transform:scaleX(1.0200);clip-path:inset(-10px -10px 0px -10px);">30</span>
<span class="t" style="left:11.78px;top:1340.76px;font-size:18px;line-height:18px;color:#505050;-webkit-text-stroke:0.25px #505050;transform:scaleX(1.0200);clip-path:inset(-10px -10px 0px -10px);">31</span>
<span class="t" style="left:11.78px;top:1370.76px;font-size:18px;line-height:18px;color:#505050;-webkit-text-stroke:0.25px #505050;transform:scaleX(1.0200);clip-path:inset(-10px -10px 0px -10px);">32</span>
<span class="t" style="left:11.78px;top:1400.76px;font-size:18px;line-height:18px;color:#505050;-webkit-text-stroke:0.25px #505050;transform:scaleX(1.0200);clip-path:inset(-10px -10px 0px -10px);">33</span>
<span class="t" style="left:11.78px;top:1430.76px;font-size:18px;line-height:18px;color:#505050;-webkit-text-stroke:0.25px #505050;transform:scaleX(1.0200);clip-path:inset(-10px -10px 0px -10px);">34</span>
<span class="t" style="left:11.78px;top:1460.76px;font-size:18px;line-height:18px;color:#505050;-webkit-text-stroke:0.25px #505050;transform:scaleX(1.0200);clip-path:inset(-10px -10px 0px -10px);">35</span>
<span class="t" style="left:11.78px;top:1490.76px;font-size:18px;line-height:18px;color:#505050;-webkit-text-stroke:0.25px #505050;transform:scaleX(1.0200);clip-path:inset(-10px -10px 0px -10px);">36</span>
<span class="t" style="left:11.78px;top:1520.76px;font-size:18px;line-height:18px;color:#505050;-webkit-text-stroke:0.25px #505050;transform:scaleX(1.0200);clip-path:inset(-10px -10px 0px -10px);">37</span>
<span class="t" style="left:11.78px;top:1550.76px;font-size:18px;line-height:18px;color:#505050;-webkit-text-stroke:0.25px #505050;transform:scaleX(1.0200);clip-path:inset(-10px -10px 0px -10px);">38</span>
<span class="t" style="left:11.78px;top:1580.76px;font-size:18px;line-height:18px;color:#505050;-webkit-text-stroke:0.25px #505050;transform:scaleX(1.0200);clip-path:inset(-10px -10px 0px -10px);">39</span>
<span class="t" style="left:11.78px;top:1610.76px;font-size:18px;line-height:18px;color:#505050;-webkit-text-stroke:0.25px #505050;transform:scaleX(1.0200);clip-path:inset(-10px -10px 0px -10px);">40</span>
<span class="t" style="left:11.78px;top:1640.76px;font-size:18px;line-height:18px;color:#505050;-webkit-text-stroke:0.25px #505050;transform:scaleX(1.0200);clip-path:inset(-10px -10px 0px -10px);">41</span>
<span class="t" style="left:11.78px;top:1670.76px;font-size:18px;line-height:18px;color:#505050;-webkit-text-stroke:0.25px #505050;transform:scaleX(1.0200);clip-path:inset(-10px -10px 0px -10px);">42</span>
<span class="t" style="left:11.78px;top:1700.76px;font-size:18px;line-height:18px;color:#505050;-webkit-text-stroke:0.25px #505050;transform:scaleX(1.0200);display:none;">43</span>
<span class="t" style="left:50.20px;top:437.07px;font-size:20px;line-height:20px;color:#000;font-weight:700;">Period</span>
<span class="t" style="left:388.20px;top:437.07px;font-size:20px;line-height:20px;color:#000;font-weight:700;transform:scaleX(1.0075);">Demand</span>
<span class="t" style="left:366.44px;top:467.07px;font-size:20px;line-height:20px;color:#000;-webkit-text-stroke:0.42px #000;transform:scaleX(0.9850);">1</span>
<span class="t" style="left:804.53px;top:467.07px;font-size:20px;line-height:20px;color:#000;-webkit-text-stroke:0.42px #000;transform:scaleX(0.9850);">101</span>
<span class="t" style="left:366.44px;top:497.07px;font-size:20px;line-height:20px;color:#000;-webkit-text-stroke:0.42px #000;transform:scaleX(0.9850);">2</span>
<span class="t" style="left:804.53px;top:497.07px;font-size:20px;line-height:20px;color:#000;-webkit-text-stroke:0.42px #000;transform:scaleX(0.9850);">101</span>
<span class="t" style="left:366.44px;top:527.07px;font-size:20px;line-height:20px;color:#000;-webkit-text-stroke:0.42px #000;transform:scaleX(0.9850);">3</span>
<span class="t" style="left:804.53px;top:527.07px;font-size:20px;line-height:20px;color:#000;-webkit-text-stroke:0.42px #000;transform:scaleX(0.9850);">101</span>
<span class="t" style="left:366.44px;top:557.07px;font-size:20px;line-height:20px;color:#000;-webkit-text-stroke:0.42px #000;transform:scaleX(0.9850);">4</span>
<span class="t" style="left:805.99px;top:557.07px;font-size:20px;line-height:20px;color:#000;-webkit-text-stroke:0.42px #000;transform:scaleX(0.9850);">114</span>
<span class="t" style="left:366.44px;top:587.07px;font-size:20px;line-height:20px;color:#000;-webkit-text-stroke:0.42px #000;transform:scaleX(0.9850);">5</span>
<span class="t" style="left:804.53px;top:587.07px;font-size:20px;line-height:20px;color:#000;-webkit-text-stroke:0.42px #000;transform:scaleX(0.9850);">101</span>
<span class="t" style="left:366.44px;top:617.07px;font-size:20px;line-height:20px;color:#000;-webkit-text-stroke:0.42px #000;transform:scaleX(0.9850);">6</span>
<span class="t" style="left:805.99px;top:617.07px;font-size:20px;line-height:20px;color:#000;-webkit-text-stroke:0.42px #000;transform:scaleX(0.9850);">113</span>
<span class="t" style="left:366.44px;top:647.07px;font-size:20px;line-height:20px;color:#000;-webkit-text-stroke:0.42px #000;transform:scaleX(0.9850);">7</span>
<span class="t" style="left:805.99px;top:647.07px;font-size:20px;line-height:20px;color:#000;-webkit-text-stroke:0.42px #000;transform:scaleX(0.9850);">112</span>
<span class="t" style="left:366.44px;top:677.07px;font-size:20px;line-height:20px;color:#000;-webkit-text-stroke:0.42px #000;transform:scaleX(0.9850);">8</span>
<span class="t" style="left:805.99px;top:677.07px;font-size:20px;line-height:20px;color:#000;-webkit-text-stroke:0.42px #000;transform:scaleX(0.9850);">114</span>
<span class="t" style="left:366.44px;top:707.07px;font-size:20px;line-height:20px;color:#000;-webkit-text-stroke:0.42px #000;transform:scaleX(0.9850);">9</span>
<span class="t" style="left:804.53px;top:707.07px;font-size:20px;line-height:20px;color:#000;-webkit-text-stroke:0.42px #000;transform:scaleX(0.9850);">103</span>
<span class="t" style="left:355.48px;top:737.07px;font-size:20px;line-height:20px;color:#000;-webkit-text-stroke:0.42px #000;transform:scaleX(0.9850);">10</span>
<span class="t" style="left:804.53px;top:737.07px;font-size:20px;line-height:20px;color:#000;-webkit-text-stroke:0.42px #000;transform:scaleX(0.9850);">109</span>
<span class="t" style="left:49.40px;top:827.07px;font-size:20px;line-height:20px;color:#000;-webkit-text-stroke:0.42px #000;transform:scaleX(1.0338);">Holding cost (per period)</span>
<span class="t" style="left:799.05px;top:827.07px;font-size:20px;line-height:20px;color:#000;-webkit-text-stroke:0.42px #000;transform:scaleX(0.9850);">0.50</span>
<span class="t" style="left:49.40px;top:857.07px;font-size:20px;line-height:20px;color:#000;-webkit-text-stroke:0.42px #000;transform:scaleX(1.0228);">Ordering cost</span>
<span class="t" style="left:804.53px;top:857.07px;font-size:20px;line-height:20px;color:#000;-webkit-text-stroke:0.42px #000;transform:scaleX(0.9850);">$25</span>
<span class="t" style="left:361.50px;top:1039.07px;font-size:20px;line-height:20px;color:#000;-webkit-text-stroke:0.42px #000;transform:scaleX(1.0654);">Given information</span>
<span class="t" style="left:1651.90px;top:527.07px;font-size:20px;line-height:20px;color:#000;-webkit-text-stroke:0.42px #000;transform:scaleX(0.9315);">Discuss </span>
<span class="t" style="left:1722.30px;top:527.07px;font-size:20px;line-height:20px;color:#000;-webkit-text-stroke:0.42px #000;transform:scaleX(1.0042);">the </span>
<span class="t" style="left:1755.80px;top:527.07px;font-size:20px;line-height:20px;color:#000;-webkit-text-stroke:0.42px #000;transform:scaleX(1.0068);">appropriateness </span>
<span class="t" style="left:1905.80px;top:527.07px;font-size:20px;line-height:20px;color:#000;-webkit-text-stroke:0.42px #000;transform:scaleX(1.0067);">of </span>
<span class="t" style="left:1928.20px;top:527.07px;font-size:20px;line-height:20px;color:#000;-webkit-text-stroke:0.42px #000;transform:scaleX(0.8277);">EOQ </span>
<span class="t" style="left:1969.60px;top:527.07px;font-size:20px;line-height:20px;color:#000;-webkit-text-stroke:0.42px #000;transform:scaleX(1.0581);">policy </span>
<span class="t" style="left:2029.60px;top:527.07px;font-size:20px;line-height:20px;color:#000;-webkit-text-stroke:0.42px #000;transform:scaleX(1.0205);">for </span>
<span class="t" style="left:2059.10px;top:527.07px;font-size:20px;line-height:20px;color:#000;-webkit-text-stroke:0.42px #000;transform:scaleX(1.0222);">the </span>
<span class="t" style="left:2093.20px;top:527.07px;font-size:20px;line-height:20px;color:#000;-webkit-text-stroke:0.42px #000;transform:scaleX(0.9705);">given </span>
<span class="t" style="left:2145.00px;top:527.07px;font-size:20px;line-height:20px;color:#000;-webkit-text-stroke:0.42px #000;transform:scaleX(1.0161);">demand </span>
<span class="t" style="left:2224.10px;top:527.07px;font-size:20px;line-height:20px;color:#000;-webkit-text-stroke:0.42px #000;transform:scaleX(1.0889);">pattern</span>
<span class="t" style="left:1124.00px;top:647.07px;font-size:20px;line-height:20px;color:#000;-webkit-text-stroke:0.42px #000;transform:scaleX(0.9798);">In </span>
<span class="t" style="left:1145.80px;top:647.07px;font-size:20px;line-height:20px;color:#000;-webkit-text-stroke:0.42px #000;transform:scaleX(1.0297);">order </span>
<span class="t" style="left:1199.60px;top:647.07px;font-size:20px;line-height:20px;color:#000;-webkit-text-stroke:0.42px #000;transform:scaleX(1.0607);">to </span>
<span class="t" style="left:1223.20px;top:647.07px;font-size:20px;line-height:20px;color:#000;-webkit-text-stroke:0.42px #000;transform:scaleX(0.9177);">use </span>
<span class="t" style="left:1257.90px;top:647.07px;font-size:20px;line-height:20px;color:#000;-webkit-text-stroke:0.42px #000;transform:scaleX(1.0162);">the </span>
<span class="t" style="left:1291.80px;top:647.07px;font-size:20px;line-height:20px;color:#000;-webkit-text-stroke:0.42px #000;transform:scaleX(0.8477);">EOQ </span>
<span class="t" style="left:1334.20px;top:647.07px;font-size:20px;line-height:20px;color:#000;-webkit-text-stroke:0.42px #000;transform:scaleX(1.0697);">policy, </span>
<span class="t" style="left:1399.20px;top:647.07px;font-size:20px;line-height:20px;color:#000;-webkit-text-stroke:0.42px #000;transform:scaleX(0.9735);">we </span>
<span class="t" style="left:1429.50px;top:647.07px;font-size:20px;line-height:20px;color:#000;-webkit-text-stroke:0.42px #000;transform:scaleX(1.0285);">must </span>
<span class="t" style="left:1479.80px;top:647.07px;font-size:20px;line-height:20px;color:#000;-webkit-text-stroke:0.42px #000;transform:scaleX(1.0508);">first </span>
<span class="t" style="left:1519.50px;top:647.07px;font-size:20px;line-height:20px;color:#000;-webkit-text-stroke:0.42px #000;transform:scaleX(1.0684);">find </span>
<span class="t" style="left:1559.90px;top:647.07px;font-size:20px;line-height:20px;color:#000;-webkit-text-stroke:0.42px #000;transform:scaleX(1.0162);">the </span>
<span class="t" style="left:1593.80px;top:647.07px;font-size:20px;line-height:20px;color:#000;-webkit-text-stroke:0.42px #000;transform:scaleX(0.9787);">Demand.  </span>
<span class="t" style="left:1684.10px;top:647.07px;font-size:20px;line-height:20px;color:#000;-webkit-text-stroke:0.42px #000;transform:scaleX(0.8417);">EOQ </span>
<span class="t" style="left:1726.20px;top:647.07px;font-size:20px;line-height:20px;color:#000;-webkit-text-stroke:0.42px #000;transform:scaleX(1.0493);">policy </span>
<span class="t" style="left:1785.70px;top:647.07px;font-size:20px;line-height:20px;color:#000;-webkit-text-stroke:0.42px #000;transform:scaleX(0.9124);">assumes </span>
<span class="t" style="left:1863.80px;top:647.07px;font-size:20px;line-height:20px;color:#000;-webkit-text-stroke:0.42px #000;transform:scaleX(1.0810);">uniform </span>
<span class="t" style="left:1941.90px;top:647.07px;font-size:20px;line-height:20px;color:#000;-webkit-text-stroke:0.42px #000;transform:scaleX(0.9943);">demand </span>
<span class="t" style="left:2019.30px;top:647.07px;font-size:20px;line-height:20px;color:#000;-webkit-text-stroke:0.42px #000;transform:scaleX(1.0078);">i.e. </span>
<span class="t" style="left:2051.80px;top:647.07px;font-size:20px;line-height:20px;color:#000;-webkit-text-stroke:0.42px #000;transform:scaleX(0.9930);">demand </span>
<span class="t" style="left:2129.10px;top:647.07px;font-size:20px;line-height:20px;color:#000;-webkit-text-stroke:0.42px #000;transform:scaleX(1.0724);">for </span>
<span class="t" style="left:2160.10px;top:647.07px;font-size:20px;line-height:20px;color:#000;-webkit-text-stroke:0.42px #000;transform:scaleX(0.9379);">each </span>
<span class="t" style="left:2206.00px;top:647.07px;font-size:20px;line-height:20px;color:#000;-webkit-text-stroke:0.42px #000;transform:scaleX(1.0367);">period </span>
<span class="t" style="left:2269.40px;top:647.07px;font-size:20px;line-height:20px;color:#000;-webkit-text-stroke:0.42px #000;transform:scaleX(1.0310);">should </span>
<span class="t" style="left:2335.90px;top:647.07px;font-size:20px;line-height:20px;color:#000;-webkit-text-stroke:0.42px #000;transform:scaleX(0.9348);">be </span>
<span class="t" style="left:2361.90px;top:647.07px;font-size:20px;line-height:20px;color:#000;-webkit-text-stroke:0.42px #000;transform:scaleX(1.0042);">the </span>
<span class="t" style="left:2395.40px;top:647.07px;font-size:20px;line-height:20px;color:#000;-webkit-text-stroke:0.42px #000;transform:scaleX(0.9412);">same. </span>
<span class="t" style="left:2451.90px;top:647.07px;font-size:20px;line-height:20px;color:#000;-webkit-text-stroke:0.42px #000;transform:scaleX(0.9372);">Since </span>
<span class="t" style="left:2504.00px;top:647.07px;font-size:20px;line-height:20px;color:#000;-webkit-text-stroke:0.42px #000;transform:scaleX(1.0192);">the </span>
<span class="t" style="left:2538.00px;top:647.07px;font-size:20px;line-height:20px;color:#000;-webkit-text-stroke:0.42px #000;transform:scaleX(0.9969);">demand </span>
<span class="t" style="left:2615.60px;top:647.07px;font-size:20px;line-height:20px;color:#000;-webkit-text-stroke:0.42px #000;transform:scaleX(0.8900);">is </span>
<span class="t" style="left:2633.40px;top:647.07px;font-size:20px;line-height:20px;color:#000;-webkit-text-stroke:0.42px #000;transform:scaleX(1.0095);">varying </span>
<span class="t" style="left:2704.10px;top:647.07px;font-size:20px;line-height:20px;color:#000;-webkit-text-stroke:0.42px #000;transform:scaleX(1.0225);">in </span>
<span class="t" style="left:2725.70px;top:647.07px;font-size:20px;line-height:20px;color:#000;-webkit-text-stroke:0.42px #000;transform:scaleX(0.9683);">each</span>
<span class="t" style="left:1124.00px;top:677.07px;font-size:20px;line-height:20px;color:#000;-webkit-text-stroke:0.42px #000;transform:scaleX(1.0402);">period, </span>
<span class="t" style="left:1193.40px;top:677.07px;font-size:20px;line-height:20px;color:#000;-webkit-text-stroke:0.42px #000;transform:scaleX(1.0402);">the </span>
<span class="t" style="left:1228.10px;top:677.07px;font-size:20px;line-height:20px;color:#000;-webkit-text-stroke:0.42px #000;transform:scaleX(0.8437);">EOQ </span>
<span class="t" style="left:1270.30px;top:677.07px;font-size:20px;line-height:20px;color:#000;-webkit-text-stroke:0.42px #000;transform:scaleX(1.0493);">policy </span>
<span class="t" style="left:1329.80px;top:677.07px;font-size:20px;line-height:20px;color:#000;-webkit-text-stroke:0.42px #000;transform:scaleX(1.0186);">should </span>
<span class="t" style="left:1395.50px;top:677.07px;font-size:20px;line-height:20px;color:#000;-webkit-text-stroke:0.42px #000;transform:scaleX(1.0762);">not </span>
<span class="t" style="left:1431.40px;top:677.07px;font-size:20px;line-height:20px;color:#000;-webkit-text-stroke:0.42px #000;transform:scaleX(0.9384);">be </span>
<span class="t" style="left:1457.50px;top:677.07px;font-size:20px;line-height:20px;color:#000;-webkit-text-stroke:0.42px #000;transform:scaleX(0.9461);">used </span>
<span class="t" style="left:1503.80px;top:677.07px;font-size:20px;line-height:20px;color:#000;-webkit-text-stroke:0.42px #000;transform:scaleX(1.0367);">in </span>
<span class="t" style="left:1525.70px;top:677.07px;font-size:20px;line-height:20px;color:#000;-webkit-text-stroke:0.42px #000;transform:scaleX(1.0467);">this </span>
<span class="t" style="left:1564.10px;top:677.07px;font-size:20px;line-height:20px;color:#000;-webkit-text-stroke:0.42px #000;transform:scaleX(0.8842);">case.  </span>
<span class="t" style="left:1616.20px;top:677.07px;font-size:20px;line-height:20px;color:#000;-webkit-text-stroke:0.42px #000;transform:scaleX(1.0086);">However, </span>
<span class="t" style="left:1705.90px;top:677.07px;font-size:20px;line-height:20px;color:#000;-webkit-text-stroke:0.42px #000;transform:scaleX(1.0225);">in </span>
<span class="t" style="left:1727.50px;top:677.07px;font-size:20px;line-height:20px;color:#000;-webkit-text-stroke:0.42px #000;transform:scaleX(1.0467);">this </span>
<span class="t" style="left:1765.90px;top:677.07px;font-size:20px;line-height:20px;color:#000;-webkit-text-stroke:0.42px #000;transform:scaleX(1.0625);">project, </span>
<span class="t" style="left:1841.50px;top:677.07px;font-size:20px;line-height:20px;color:#000;-webkit-text-stroke:0.42px #000;transform:scaleX(1.0444);">our </span>
<span class="t" style="left:1877.50px;top:677.07px;font-size:20px;line-height:20px;color:#000;-webkit-text-stroke:0.42px #000;transform:scaleX(0.9591);">goal </span>
<span class="t" style="left:1919.10px;top:677.07px;font-size:20px;line-height:20px;color:#000;-webkit-text-stroke:0.42px #000;transform:scaleX(0.8950);">is </span>
<span class="t" style="left:1937.00px;top:677.07px;font-size:20px;line-height:20px;color:#000;-webkit-text-stroke:0.42px #000;transform:scaleX(1.1146);">to </span>
<span class="t" style="left:1961.80px;top:677.07px;font-size:20px;line-height:20px;color:#000;-webkit-text-stroke:0.42px #000;transform:scaleX(0.9315);">analyze </span>
<span class="t" style="left:2031.20px;top:677.07px;font-size:20px;line-height:20px;color:#000;-webkit-text-stroke:0.42px #000;transform:scaleX(1.0402);">the </span>
<span class="t" style="left:2065.90px;top:677.07px;font-size:20px;line-height:20px;color:#000;-webkit-text-stroke:0.42px #000;transform:scaleX(0.8437);">EOQ </span>
<span class="t" style="left:2108.10px;top:677.07px;font-size:20px;line-height:20px;color:#000;-webkit-text-stroke:0.42px #000;transform:scaleX(1.0581);">policy </span>
<span class="t" style="left:2168.10px;top:677.07px;font-size:20px;line-height:20px;color:#000;-webkit-text-stroke:0.42px #000;transform:scaleX(1.0551);">for </span>
<span class="t" style="left:2198.60px;top:677.07px;font-size:20px;line-height:20px;color:#000;-webkit-text-stroke:0.42px #000;transform:scaleX(1.0140);">this </span>
<span class="t" style="left:2235.80px;top:677.07px;font-size:20px;line-height:20px;color:#000;-webkit-text-stroke:0.42px #000;">demand </span>
<span class="t" style="left:2313.60px;top:677.07px;font-size:20px;line-height:20px;color:#000;-webkit-text-stroke:0.42px #000;transform:scaleX(0.9734);">and </span>
<span class="t" style="left:2351.50px;top:677.07px;font-size:20px;line-height:20px;color:#000;-webkit-text-stroke:0.42px #000;transform:scaleX(1.0748);">comment</span>
<span class="t" style="left:1123.40px;top:979.07px;font-size:20px;line-height:20px;color:#000;-webkit-text-stroke:0.42px #000;transform:scaleX(0.9615);">Step 1</span>
<span class="t" style="left:1525.70px;top:979.07px;font-size:20px;line-height:20px;color:#000;-webkit-text-stroke:0.42px #000;transform:scaleX(1.0268);">approximate the Demand</span>
<span class="t" style="left:1349.40px;top:1039.07px;font-size:20px;line-height:20px;color:#000;-webkit-text-stroke:0.42px #000;transform:scaleX(1.0385);">Total demand</span>
<span class="t" style="left:1989.50px;top:1039.07px;font-size:20px;line-height:20px;color:#000;-webkit-text-stroke:0.42px #000;transform:scaleX(1.0764);">1069</span>
<span class="t" style="left:1349.40px;top:1069.07px;font-size:20px;line-height:20px;color:#000;-webkit-text-stroke:0.42px #000;transform:scaleX(1.0564);">Total periods</span>
<span class="t" style="left:2015.48px;top:1069.07px;font-size:20px;line-height:20px;color:#000;-webkit-text-stroke:0.42px #000;transform:scaleX(0.9850);">10</span>
<span class="t" style="left:1349.40px;top:1129.07px;font-size:20px;line-height:20px;color:#000;-webkit-text-stroke:0.42px #000;transform:scaleX(0.9960);">Average demand per period</span>
<span class="t" style="left:1983.30px;top:1129.07px;font-size:20px;line-height:20px;color:#000;-webkit-text-stroke:0.42px #000;transform:scaleX(1.0806);">106.9</span>
<span class="t" style="left:1123.40px;top:1249.07px;font-size:20px;line-height:20px;color:#000;-webkit-text-stroke:0.42px #000;transform:scaleX(0.9615);">Step 2</span>
<span class="t" style="left:1349.40px;top:1249.07px;font-size:20px;line-height:20px;color:#000;-webkit-text-stroke:0.42px #000;transform:scaleX(0.9291);">EOQ</span>
<span class="t" style="left:1911.80px;top:1249.07px;font-size:20px;line-height:20px;color:#000;-webkit-text-stroke:0.42px #000;transform:scaleX(1.0754);">103.3924562</span>
<span class="t" style="left:1591.40px;top:1279.07px;font-size:20px;line-height:20px;color:#000;-webkit-text-stroke:0.42px #000;transform:scaleX(1.1575);">or</span>
<span class="t" style="left:2015.48px;top:1279.07px;font-size:20px;line-height:20px;color:#000;-webkit-text-stroke:0.42px #000;transform:scaleX(0.9850);">52</span>
<span class="t" style="left:1600.00px;top:1309.07px;font-size:20px;line-height:20px;color:#000;-webkit-text-stroke:0.42px #000;transform:scaleX(1.0067);">Costs(for 10 periods)</span>
<span class="t" style="left:1349.40px;top:1369.07px;font-size:20px;line-height:20px;color:#000;-webkit-text-stroke:0.42px #000;transform:scaleX(1.0203);">No of orders</span>
<span class="t" style="left:1911.80px;top:1369.07px;font-size:20px;line-height:20px;color:#000;-webkit-text-stroke:0.42px #000;transform:scaleX(1.0754);">10.33924562</span>
<span class="t" style="left:1349.40px;top:1399.07px;font-size:20px;line-height:20px;color:#000;-webkit-text-stroke:0.42px #000;transform:scaleX(1.0288);">Total Ordering cost</span>
<span class="t" style="left:1959.40px;top:1399.07px;font-size:20px;line-height:20px;color:#000;-webkit-text-stroke:0.42px #000;transform:scaleX(1.0789);">$258.48</span>
<span class="t" style="left:1349.40px;top:1429.07px;font-size:20px;line-height:20px;color:#000;-webkit-text-stroke:0.42px #000;transform:scaleX(1.0395);">Total holding cost (per period)</span>
<span class="t" style="left:1911.80px;top:1429.07px;font-size:20px;line-height:20px;color:#000;-webkit-text-stroke:0.42px #000;transform:scaleX(1.0892);">25.84811405</span>
<span class="t" style="left:1349.40px;top:1459.07px;font-size:20px;line-height:20px;color:#000;-webkit-text-stroke:0.42px #000;transform:scaleX(1.0440);">Total for 10 periods</span>
<span class="t" style="left:1911.80px;top:1459.07px;font-size:20px;line-height:20px;color:#000;-webkit-text-stroke:0.42px #000;transform:scaleX(1.0892);">258.4811405</span>
<span class="t" style="left:1443.70px;top:1669.07px;font-size:20px;line-height:20px;color:#000;font-weight:700;transform:scaleX(1.0146);">Implementation </span>
<span class="t" style="left:1599.30px;top:1669.07px;font-size:20px;line-height:20px;color:#000;font-weight:700;transform:scaleX(0.9248);">of </span>
<span class="t" style="left:1621.90px;top:1669.07px;font-size:20px;line-height:20px;color:#000;font-weight:700;transform:scaleX(0.9216);">this </span>
<span class="t" style="left:1659.80px;top:1669.07px;font-size:20px;line-height:20px;color:#000;font-weight:700;transform:scaleX(0.9422);">policy </span>
<span class="t" style="left:1719.50px;top:1669.07px;font-size:20px;line-height:20px;color:#000;font-weight:700;transform:scaleX(0.9264);">and </span>
<span class="t" style="left:1757.60px;top:1669.07px;font-size:20px;line-height:20px;color:#000;font-weight:700;transform:scaleX(0.9760);">approximate </span>
<span class="t" style="left:1879.10px;top:1669.07px;font-size:20px;line-height:20px;color:#000;font-weight:700;transform:scaleX(0.9167);">cost </span>
<span class="t" style="left:1921.90px;top:1669.07px;font-size:20px;line-height:20px;color:#000;font-weight:700;transform:scaleX(0.9734);">calculation</span>
<span class="t" style="left:156.00px;top:1714.88px;font-size:24.6px;line-height:24.6px;color:#3a7d52;font-weight:700;transform:scaleX(0.9836);">EOQ Project</span>
<span class="t" style="left:374.50px;top:1714.78px;font-size:24.6px;line-height:24.6px;color:#4c4c4c;-webkit-text-stroke:0.3px #4c4c4c;transform:scaleX(1.0274);">Single period Model Project</span>
<span class="t" style="left:28.60px;top:1766.72px;font-size:23.6px;line-height:23.6px;color:#4a4a4a;-webkit-text-stroke:0.25px #4a4a4a;transform:scaleX(1.0687);">Select </span>
<span class="t" style="left:105.70px;top:1766.72px;font-size:23.6px;line-height:23.6px;color:#4a4a4a;-webkit-text-stroke:0.25px #4a4a4a;transform:scaleX(1.0937);">destination </span>
<span class="t" style="left:237.70px;top:1766.72px;font-size:23.6px;line-height:23.6px;color:#4a4a4a;-webkit-text-stroke:0.25px #4a4a4a;transform:scaleX(1.0692);">and </span>
<span class="t" style="left:286.80px;top:1766.72px;font-size:23.6px;line-height:23.6px;color:#4a4a4a;-webkit-text-stroke:0.25px #4a4a4a;transform:scaleX(1.0770);">press </span>
<span class="t" style="left:356.00px;top:1766.72px;font-size:23.6px;line-height:23.6px;color:#4a4a4a;-webkit-text-stroke:0.25px #4a4a4a;transform:scaleX(0.9627);">ENTER </span>
<span class="t" style="left:439.30px;top:1766.72px;font-size:23.6px;line-height:23.6px;color:#4a4a4a;-webkit-text-stroke:0.25px #4a4a4a;transform:scaleX(1.0891);">or </span>
<span class="t" style="left:469.30px;top:1766.72px;font-size:23.6px;line-height:23.6px;color:#4a4a4a;-webkit-text-stroke:0.25px #4a4a4a;transform:scaleX(1.0782);">choose </span>
<span class="t" style="left:558.40px;top:1766.72px;font-size:23.6px;line-height:23.6px;color:#4a4a4a;-webkit-text-stroke:0.25px #4a4a4a;transform:scaleX(1.0457);">Paste</span>
<span class="t" style="left:2767.00px;top:1765.88px;font-size:24px;line-height:24px;color:#4f4f4f;transform:scaleX(1.0588);">100%</span>
</body></html>
